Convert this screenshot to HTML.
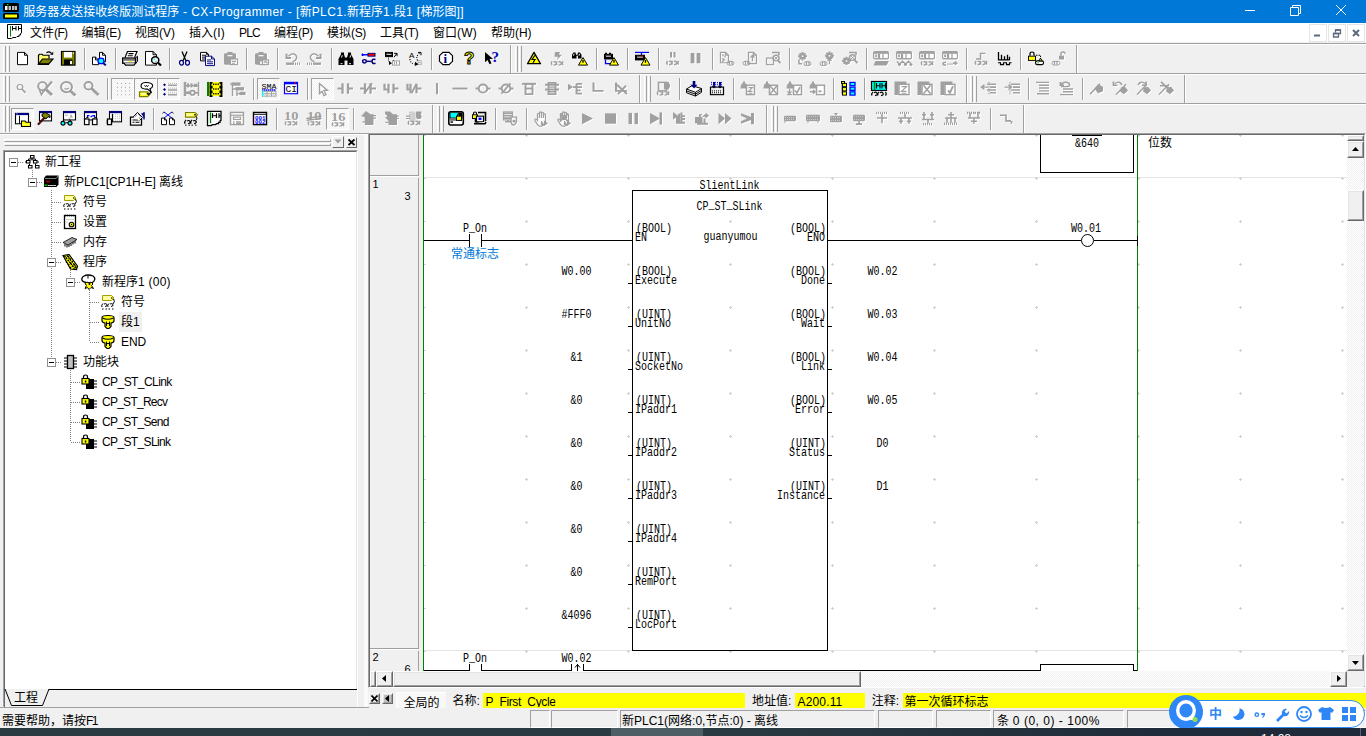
<!DOCTYPE html><html lang="zh"><head><meta charset="utf-8"><title>CX-Programmer</title><style>
html,body{margin:0;padding:0;}
body{width:1366px;height:736px;overflow:hidden;background:#f0f0f0;position:relative;
 font-family:"Liberation Sans","Noto Sans CJK SC",sans-serif;font-size:12px;color:#000;}
div,span,svg{position:absolute;box-sizing:border-box;}
.t{white-space:nowrap;line-height:16px;height:16px;}
i{font-style:normal;}
.hl{height:1px;}
.vl{width:1px;}
.sep{width:2px;border-left:1px solid #a0a0a0;border-right:1px solid #fff;}
.grip{width:3px;border-left:1px solid #fff;border-right:1px solid #a0a0a0;}
.pressed{border:1px solid;border-color:#a0a0a0 #fff #fff #a0a0a0;
 background-image:linear-gradient(45deg,#fff 25%,transparent 25%,transparent 75%,#fff 75%),linear-gradient(45deg,#fff 25%,transparent 25%,transparent 75%,#fff 75%);
 background-size:2px 2px;background-position:0 0,1px 1px;background-color:#f0f0f0;}
.btn3d{border:1px solid;border-color:#fff #696969 #696969 #fff;background:#f0f0f0;}
.btn3d:after{content:"";position:absolute;right:0;bottom:0;left:0;top:0;border:1px solid;border-color:#e3e3e3 #a0a0a0 #a0a0a0 #e3e3e3;}
.pane{border:1px solid;border-color:#a0a0a0 #fff #fff #a0a0a0;height:17px;}
.yel{background:#ffff00;height:15px;}
.hatch{background-image:linear-gradient(45deg,#fff 25%,transparent 25%,transparent 75%,#fff 75%),linear-gradient(45deg,#fff 25%,transparent 25%,transparent 75%,#fff 75%);
 background-size:2px 2px;background-position:0 0,1px 1px;background-color:#f0f0f0;}
</style></head><body><div class="" style="left:0px;top:0px;width:1366px;height:23px;background:#0078d7;"></div><svg style="left:2px;top:3px" width="18" height="17" viewBox="0 0 18 17"><rect x="1" y="0" width="16" height="9" rx="1.5" fill="#000"/><rect x="3" y="3" width="2.5" height="4" fill="#fff"/><rect x="6.5" y="3" width="2.5" height="4" fill="#c0c0c0"/><rect x="10" y="3" width="2.5" height="4" fill="#c0c0c0"/><rect x="13" y="3" width="2" height="4" fill="#c0c0c0"/><rect x="5" y="1" width="1.5" height="1.2" fill="#0f0"/><rect x="1" y="10" width="16" height="6" rx="1.5" fill="#000"/><rect x="3" y="11.5" width="12" height="3" fill="#ffff00"/></svg><span class="t" style="left:23.3px;top:4px;color:#fff;">服务器发送接收终版测试程序<i style="letter-spacing:0.416px"> - CX-Programmer - [</i>新<i style="letter-spacing:0.416px">PLC1.</i>新程序<i style="letter-spacing:0.416px">1.</i>段<i style="letter-spacing:0.416px">1 [</i>梯形图<i style="letter-spacing:0.416px">]]</i></span><svg style="left:1240px;top:0" width="126" height="23" viewBox="0 0 126 23" fill="none" stroke="#fff" stroke-width="1"><path d="M5 10.5h10"/><path d="M50.5 7.5h8v8h-8z M52.5 7.5v-2h8v8h-2"/><path d="M96 5l10 10M106 5l-10 10"/></svg><div class="" style="left:0px;top:23px;width:1366px;height:19px;background:#fff;"></div><div class="" style="left:0px;top:42px;width:1366px;height:1px;background:#f0f0f0;"></div><div class="" style="left:0px;top:43px;width:1366px;height:1px;background:#a0a0a0;"></div><div class="" style="left:0px;top:44px;width:1366px;height:1px;background:#fff;"></div><svg style="left:7px;top:24px" width="16" height="16" viewBox="0 0 16 16"><path d="M0.5 0.5h14v8.500l-1 .5v1.500h-1.500v1.500h-2l-1 1h-3l-1.500 1h-4z" fill="#fff" stroke="#000"/><path d="M3.5 2v10.500" stroke="#008000"/><path d="M5.500 2v4.500M5.500 4.500h3.500M9 2v4.500M11.500 2v4.500M11.500 4.500h3" stroke="#000" fill="none"/></svg><span class="t m" style="left:30px;top:24.5px;">文件<i style="letter-spacing:-0.609px">(F)</i></span><span class="t m" style="left:81.5px;top:24.5px;">编辑<i style="letter-spacing:-0.167px">(E)</i></span><span class="t m" style="left:135px;top:24.5px;">视图<i style="letter-spacing:0.000px">(V)</i></span><span class="t m" style="left:189px;top:24.5px;">插入<i style="letter-spacing:0.224px">(I)</i></span><span class="t m" style="left:239px;top:24.5px;"><i style="letter-spacing:-0.781px">PLC</i></span><span class="t m" style="left:274px;top:24.5px;">编程<i style="letter-spacing:-0.333px">(P)</i></span><span class="t m" style="left:327px;top:24.5px;">模拟<i style="letter-spacing:-0.333px">(S)</i></span><span class="t m" style="left:380px;top:24.5px;">工具<i style="letter-spacing:-0.276px">(T)</i></span><span class="t m" style="left:433px;top:24.5px;">窗口<i style="letter-spacing:0.224px">(W)</i></span><span class="t m" style="left:491px;top:24.5px;">帮助<i style="letter-spacing:-0.057px">(H)</i></span><div class="" style="left:1309px;top:24px;width:18px;height:18px;background:#fff;border:1px solid #e5e5e5;"></div><div class="" style="left:1328px;top:24px;width:18px;height:18px;background:#fff;border:1px solid #e5e5e5;"></div><div class="" style="left:1347px;top:24px;width:18px;height:18px;background:#fff;border:1px solid #e5e5e5;"></div><svg style="left:1309px;top:24px" width="56" height="18" viewBox="0 0 56 18" fill="none" stroke="#5d6b7f"><path d="M5 11.5h6" stroke-width="2"/><path d="M24.5 9.5h5v3.500h-5z M26.5 8.500v-2.500h5v3.500h-2" stroke-width="1.3"/><path d="M24 9.500h6M26 6h6" stroke-width="1.600"/><path d="M44 6l6 6M50 6l-6 6" stroke-width="2"/></svg><div class="" style="left:0px;top:73px;width:1366px;height:1px;background:#a0a0a0;"></div><div class="" style="left:0px;top:74px;width:1366px;height:1px;background:#fff;"></div><div class="" style="left:0px;top:103px;width:1366px;height:1px;background:#a0a0a0;"></div><div class="" style="left:0px;top:104px;width:1366px;height:1px;background:#fff;"></div><div class="" style="left:0px;top:133px;width:1366px;height:1px;background:#a0a0a0;"></div><div class="" style="left:0px;top:134px;width:368px;height:1px;background:#fff;"></div><div class="grip" style="left:3px;top:46px;width:3px;height:26px;"></div><div class="grip" style="left:7px;top:46px;width:3px;height:26px;"></div><svg style="left:14px;top:51px;overflow:visible" width="17" height="16" viewBox="0 0 17 17" preserveAspectRatio="none"><path d="M3.5 1.5h7l3 3v10h-10z M10.5 1.5v3h3" fill="#fff" stroke="#000" stroke-width="1"/></svg><svg style="left:37px;top:51px;overflow:visible" width="17" height="16" viewBox="0 0 17 17" preserveAspectRatio="none"><path d="M1.500 14v-9.500l1-1h2.500l1 1h6v3.500" fill="#ffff70" stroke="#000" stroke-width="1.2"/><path d="M1.500 14l4-5.500h10.500l-4.500 5.500z" fill="#808000" stroke="#000" stroke-width="1.2"/><path d="M1 14h11" fill="none" stroke="#000" stroke-width="1.6"/><path d="M9.500 2q2.500-2.500 5 .5" fill="none" stroke="#000" stroke-width="1.2"/><path d="M13 4h3.200v-3.200z" fill="#000"/></svg><svg style="left:60px;top:51px;overflow:visible" width="17" height="16" viewBox="0 0 17 17" preserveAspectRatio="none"><rect x="1.5" y="0.5" width="13.5" height="14.5" fill="#808000" stroke="#000" stroke-width="1.2"/><rect x="4" y="1" width="8" height="6" fill="#fff"/><rect x="13" y="1.5" width="1" height="1.5" fill="#fff"/><rect x="4" y="9" width="8.5" height="6" fill="#000"/><rect x="10" y="10.5" width="2" height="3.5" fill="#fff"/></svg><div class="sep" style="left:84px;top:48px;width:2px;height:22px;"></div><svg style="left:91px;top:51px;overflow:visible" width="17" height="16" viewBox="0 0 17 17" preserveAspectRatio="none"><path d="M1.5 6.5h3l3 3v5h-6z M4.5 6.5v3h3" fill="#fff" stroke="#000" stroke-width="1"/><path d="M8.5 1.5h3l3 3v7h-6z M11.5 1.5v3h3" fill="#fff" stroke="#000" stroke-width="1"/><circle cx="10" cy="10.5" r="3" fill="#00ffff" stroke="#0000ff" stroke-width="1.3"/><path d="M12.3 12.800l2.500 2.500" fill="none" stroke="#000080" stroke-width="2"/></svg><div class="sep" style="left:115px;top:48px;width:2px;height:22px;"></div><svg style="left:122px;top:51px;overflow:visible" width="17" height="16" viewBox="0 0 17 17" preserveAspectRatio="none"><path d="M3 7l2.500-6.500h9.500l-2.500 6.500" fill="#fff" stroke="#000" stroke-width="1.2"/><path d="M6.500 2.800h5M5.800 5h5" fill="none" stroke="#000" stroke-width="1.1"/><path d="M13.500 7.500l2-2v5.500l-2.500 3" fill="#c8c8c8" stroke="#000" stroke-width="1"/><rect x="0.7" y="7.5" width="12.8" height="5.5" fill="#fff" stroke="#000" stroke-width="1.4"/><path d="M1.500 9.500h11.500" fill="none" stroke="#000" stroke-width="1"/><path d="M2 13l1.500 2h8.500l1.500-2" fill="#fff" stroke="#000" stroke-width="1.3"/><rect x="7" y="10.5" width="3" height="1.2" fill="#ffff00"/></svg><svg style="left:145px;top:51px;overflow:visible" width="17" height="16" viewBox="0 0 17 17" preserveAspectRatio="none"><path d="M0.5 0.5h7.5l3.5 3.5v11h-11z M8 0.5v3.5h3.5" fill="#fff" stroke="#000" stroke-width="1"/><circle cx="10.2" cy="9.7" r="3.6" fill="#f6f0f0" stroke="#000" stroke-width="1.5"/><rect x="8.5" y="8" width="1.5" height="1.5" fill="#00ffff"/><rect x="10" y="10.5" width="1.5" height="1.2" fill="#00ffff"/><path d="M13 12.500l3 3" fill="none" stroke="#000" stroke-width="2.2"/></svg><div class="sep" style="left:169px;top:48px;width:2px;height:22px;"></div><svg style="left:176px;top:51px;overflow:visible" width="17" height="16" viewBox="0 0 17 17" preserveAspectRatio="none"><path d="M6 0.5l4 10M11 0.5l-4 10" fill="none" stroke="#000" stroke-width="1.3"/><ellipse cx="5.5" cy="12.5" rx="2" ry="2.5" fill="none" stroke="#000080" stroke-width="1.2"/><ellipse cx="11.5" cy="12.5" rx="2" ry="2.5" fill="none" stroke="#000080" stroke-width="1.2"/></svg><svg style="left:199px;top:51px;overflow:visible" width="17" height="16" viewBox="0 0 17 17" preserveAspectRatio="none"><path d="M1.5 1.5h6l2 2v7h-8z M7.5 1.5v2h2" fill="#fff" stroke="#000" stroke-width="1"/><path d="M3 4.500h4M3 6.500h5M3 8.500h5" fill="none" stroke="#000" stroke-width="1"/><path d="M6.5 5.5h6l3 3v7h-9z M12.5 5.5v3h3" fill="#fff" stroke="#000080" stroke-width="1"/><path d="M8 9.500h4M8 11.500h6M8 13.500h6" fill="none" stroke="#000080" stroke-width="1"/></svg><svg style="left:222px;top:51px;overflow:visible" width="17" height="16" viewBox="0 0 17 17" preserveAspectRatio="none"><g transform="translate(1,1)"><path d="M2 4q0-1.500 1.500-1.500h9q1.500 0 1.500 1.500v9q0 1.500-1.500 1.500h-9q-1.500 0-1.500-1.500z" fill="#ffffff"/><rect x="5.5" y="1" width="5" height="2.5" fill="#ffffff"/><path d="M5.500 5h5" fill="none" stroke="#fff" stroke-width="1.25"/><rect x="8.5" y="8.5" width="7" height="6" fill="#fff" stroke="#ffffff" stroke-width="1.25"/><path d="M10 11h4M10 13h3" fill="none" stroke="#ffffff" stroke-width="1.25"/></g><path d="M2 4q0-1.500 1.500-1.500h9q1.500 0 1.500 1.500v9q0 1.500-1.500 1.500h-9q-1.500 0-1.500-1.500z" fill="#a0a0a0"/><rect x="5.5" y="1" width="5" height="2.5" fill="#a0a0a0"/><path d="M5.500 5h5" fill="none" stroke="#fff" stroke-width="1.25"/><rect x="8.5" y="8.5" width="7" height="6" fill="#fff" stroke="#a0a0a0" stroke-width="1.25"/><path d="M10 11h4M10 13h3" fill="none" stroke="#a0a0a0" stroke-width="1.25"/></svg><div class="sep" style="left:246px;top:48px;width:2px;height:22px;"></div><svg style="left:253px;top:51px;overflow:visible" width="17" height="16" viewBox="0 0 17 17" preserveAspectRatio="none"><g transform="translate(1,1)"><path d="M2 4q0-1.500 1.500-1.500h9q1.500 0 1.500 1.500v9q0 1.500-1.500 1.500h-9q-1.500 0-1.500-1.500z" fill="#ffffff"/><rect x="5.5" y="1" width="5" height="2.5" fill="#ffffff"/><path d="M5.500 5h5" fill="none" stroke="#fff" stroke-width="1.25"/><rect x="6.5" y="10.5" width="5" height="4" fill="#fff" stroke="#ffffff" stroke-width="1.25"/><rect x="9.5" y="9.5" width="6" height="5" fill="#fff" stroke="#ffffff" stroke-width="1.25"/><path d="M11 12.500l1.500-1.500l2 2" fill="none" stroke="#ffffff" stroke-width="1.25"/></g><path d="M2 4q0-1.500 1.500-1.500h9q1.500 0 1.500 1.500v9q0 1.500-1.500 1.500h-9q-1.500 0-1.500-1.500z" fill="#a0a0a0"/><rect x="5.5" y="1" width="5" height="2.5" fill="#a0a0a0"/><path d="M5.500 5h5" fill="none" stroke="#fff" stroke-width="1.25"/><rect x="6.5" y="10.5" width="5" height="4" fill="#fff" stroke="#a0a0a0" stroke-width="1.25"/><rect x="9.5" y="9.5" width="6" height="5" fill="#fff" stroke="#a0a0a0" stroke-width="1.25"/><path d="M11 12.500l1.500-1.500l2 2" fill="none" stroke="#a0a0a0" stroke-width="1.25"/></svg><div class="sep" style="left:277px;top:48px;width:2px;height:22px;"></div><svg style="left:284px;top:51px;overflow:visible" width="17" height="16" viewBox="0 0 17 17" preserveAspectRatio="none"><g transform="translate(1,1)"><path d="M4.500 5.500q5-5 8 0q1 4-4 6" fill="none" stroke="#ffffff" stroke-width="1.50"/><path d="M2.500 3v4.500h4.500" fill="none" stroke="#ffffff" stroke-width="2.00"/><path d="M2 13.500h8" fill="none" stroke="#ffffff" stroke-width="2.50"/><path d="M11 13.500h5" fill="none" stroke="#ffffff" stroke-width="2.50" stroke-dasharray="1 1"/></g><path d="M4.500 5.500q5-5 8 0q1 4-4 6" fill="none" stroke="#a0a0a0" stroke-width="1.50"/><path d="M2.500 3v4.500h4.500" fill="none" stroke="#a0a0a0" stroke-width="2.00"/><path d="M2 13.500h8" fill="none" stroke="#a0a0a0" stroke-width="2.50"/><path d="M11 13.500h5" fill="none" stroke="#a0a0a0" stroke-width="2.50" stroke-dasharray="1 1"/></svg><svg style="left:307px;top:51px;overflow:visible" width="17" height="16" viewBox="0 0 17 17" preserveAspectRatio="none"><g transform="translate(1,1)"><path d="M11.500 5.500q-5-5-8 0q-1 4 4 6" fill="none" stroke="#ffffff" stroke-width="1.50"/><path d="M13.500 3v4.500h-4.500" fill="none" stroke="#ffffff" stroke-width="2.00"/><path d="M6 13.500h8" fill="none" stroke="#ffffff" stroke-width="2.50"/><path d="M0 13.500h5" fill="none" stroke="#ffffff" stroke-width="2.50" stroke-dasharray="1 1"/></g><path d="M11.500 5.500q-5-5-8 0q-1 4 4 6" fill="none" stroke="#a0a0a0" stroke-width="1.50"/><path d="M13.500 3v4.500h-4.500" fill="none" stroke="#a0a0a0" stroke-width="2.00"/><path d="M6 13.500h8" fill="none" stroke="#a0a0a0" stroke-width="2.50"/><path d="M0 13.500h5" fill="none" stroke="#a0a0a0" stroke-width="2.50" stroke-dasharray="1 1"/></svg><div class="sep" style="left:331px;top:48px;width:2px;height:22px;"></div><svg style="left:338px;top:51px;overflow:visible" width="17" height="16" viewBox="0 0 17 17" preserveAspectRatio="none"><path d="M0.500 15v-6.500l2.500-5v-2h3v2l1 3.500h2l1-3.500v-2h3v2l2.500 5v6.500h-6v-5h-3v5z" fill="#000"/><rect x="2.5" y="13" width="2" height="1" fill="#fff"/><rect x="11" y="13" width="2" height="1" fill="#fff"/><path d="M3.500 7l.8-2.500M12 7l.8-2.500" fill="none" stroke="#fff" stroke-width="1"/></svg><svg style="left:361px;top:51px;overflow:visible" width="17" height="16" viewBox="0 0 17 17" preserveAspectRatio="none"><path d="M2 4h5" fill="none" stroke="#0000ff" stroke-width="1.5"/><rect x="7" y="2.5" width="7" height="3" fill="#ff0000" stroke="#000080" stroke-width="1"/><path d="M1 3l2 1l-2 1z" fill="#0000ff" stroke="#0000ff" stroke-width="1"/><circle cx="3.5" cy="11" r="1.8" fill="none" stroke="#000080" stroke-width="1.5"/><path d="M5.500 11h5" fill="none" stroke="#000080" stroke-width="1.5"/><path d="M14.500 9q-3.500-1-3.500 2t3.500 2" fill="none" stroke="#000080" stroke-width="1.6"/></svg><svg style="left:384px;top:51px;overflow:visible" width="17" height="16" viewBox="0 0 17 17" preserveAspectRatio="none"><rect x="1.5" y="1.5" width="7" height="4.5" fill="#000" stroke="#000" stroke-width="1"/><path d="M2.500 3.500h5" fill="none" stroke="#fff" stroke-width="1"/><path d="M3 2.500h1" fill="none" stroke="#008000" stroke-width="1"/><path d="M4.500 7v3.500l1.500 2" fill="none" stroke="#000" stroke-width="1" stroke-dasharray="1 1"/><path d="M10 2.500h3v3M13 2.500l-3 4" fill="none" stroke="#000" stroke-width="1"/><path d="M5 10.500l3 2.500l-3 2z" fill="#000"/><rect x="8.5" y="10.5" width="7" height="4.5" fill="#fff" stroke="#a0a0a0" stroke-width="1"/><path d="M10.500 11v3.500M12.500 11v3.500" fill="none" stroke="#a0a0a0" stroke-width="1"/><path d="M9 10h1" fill="none" stroke="#008000" stroke-width="1"/></svg><svg style="left:407px;top:51px;overflow:visible" width="17" height="16" viewBox="0 0 17 17" preserveAspectRatio="none"><text x="2" y="7" font-size="8" font-weight="normal" font-family="'Liberation Sans',sans-serif" fill="#000" >A</text><text x="10" y="15" font-size="8" font-weight="normal" font-family="'Liberation Sans',sans-serif" fill="#a0a0a0" >B</text><path d="M3 8.500q0 5 5.500 5.500" fill="none" stroke="#000" stroke-width="1.2" stroke-dasharray="1 1.500"/><path d="M8 11.500l3.500 2.500l-3.500 2z" fill="#000"/><path d="M10.500 10q-2-4 2-7.500" fill="none" stroke="#000" stroke-width="1.2" stroke-dasharray="1 1.500"/><path d="M11 1.500h3v3" fill="none" stroke="#000" stroke-width="1"/></svg><div class="sep" style="left:431px;top:48px;width:2px;height:22px;"></div><svg style="left:438px;top:51px;overflow:visible" width="17" height="16" viewBox="0 0 17 17" preserveAspectRatio="none"><path d="M5 1.500h6l3.500 3.500v6l-3.500 3.500h-6l-3.500-3.500v-6z" fill="#fff" stroke="#000" stroke-width="1.2"/><text x="5.5" y="13" font-size="13" font-weight="bold" font-family="'Liberation Serif',sans-serif" fill="#000080" >i</text></svg><svg style="left:461px;top:51px;overflow:visible" width="17" height="16" viewBox="0 0 17 17" preserveAspectRatio="none"><text x="3" y="14" font-size="17" font-weight="bold" font-family="'Liberation Sans',sans-serif" fill="#ffff00"  stroke="#000" stroke-width="1">?</text></svg><svg style="left:484px;top:51px;overflow:visible" width="17" height="16" viewBox="0 0 17 17" preserveAspectRatio="none"><path d="M1 1v11l2.500-2.500l2 4.500l2-1l-2-4.500h3.500z" fill="#000"/><text x="7.5" y="12" font-size="15" font-weight="bold" font-family="'Liberation Serif',sans-serif" fill="#0000c0" >?</text></svg><div class="" style="left:510px;top:45px;width:1px;height:28px;background:#a0a0a0;"></div><div class="" style="left:511px;top:45px;width:1px;height:28px;background:#fff;"></div><div class="grip" style="left:515px;top:46px;width:3px;height:26px;"></div><div class="grip" style="left:519px;top:46px;width:3px;height:26px;"></div><svg style="left:526px;top:51px;overflow:visible" width="17" height="16" viewBox="0 0 17 17" preserveAspectRatio="none"><path d="M8 1.500l6.500 12h-13z" fill="#ffff00" stroke="#000" stroke-width="1.3" stroke-linejoin="round"/><path d="M9 4.500l-3 4.500h3l-2 3.500" fill="none" stroke="#000" stroke-width="1.2"/></svg><svg style="left:549px;top:51px;overflow:visible" width="17" height="16" viewBox="0 0 17 17" preserveAspectRatio="none"><g transform="translate(1,1)"><path d="M6 1h5l-1 3h3l-5 5.500l1-3.500h-3.500z" fill="#ffffff"/><path d="M3 11q-1.5 2 0 4 M4.5 11.8q2.2 -1 3 1.2q-.5 2.2 -3 2 M8 11q-1.5 2 0 4 M9.5 11.8q2.2 -1 3 1.2q-.5 2.2 -3 2 M14 11q-1.5 2 0 4" fill="none" stroke="#ffffff" stroke-width="1.56"/></g><path d="M6 1h5l-1 3h3l-5 5.500l1-3.500h-3.500z" fill="#a0a0a0"/><path d="M3 11q-1.5 2 0 4 M4.5 11.8q2.2 -1 3 1.2q-.5 2.2 -3 2 M8 11q-1.5 2 0 4 M9.5 11.8q2.2 -1 3 1.2q-.5 2.2 -3 2 M14 11q-1.5 2 0 4" fill="none" stroke="#a0a0a0" stroke-width="1.56"/></svg><svg style="left:572px;top:51px;overflow:visible" width="17" height="16" viewBox="0 0 17 17" preserveAspectRatio="none"><path d="M0 8v-4l1.500-2.500h2l.5 2.500h1.500l.5-2.500h2l1.500 2.500v4h-3.500v-3h-1.500v3z" fill="#000"/><path d="M1.500 5l.5-2M7 5l.5-2" fill="none" stroke="#fff" stroke-width="1"/><path d="M11 7l4.5 8h-9z" fill="#ffff00" stroke="#000" stroke-width="1" stroke-linejoin="round"/><path d="M11 9.5v3 M11 13.7v.1" fill="none" stroke="#000" stroke-width="1.3"/></svg><div class="sep" style="left:596px;top:48px;width:2px;height:22px;"></div><svg style="left:603px;top:51px;overflow:visible" width="17" height="16" viewBox="0 0 17 17" preserveAspectRatio="none"><rect x="1.5" y="3.5" width="8" height="5" fill="#000" stroke="#000" stroke-width="1"/><path d="M2 2.500h2M6 2.500h2" fill="none" stroke="#000" stroke-width="1.5"/><path d="M3 5.500h5" fill="none" stroke="#fff" stroke-width="1"/><path d="M2 5h.8" fill="none" stroke="#008000" stroke-width="1"/><path d="M2.500 9v4.500h5" fill="none" stroke="#0000ff" stroke-width="1.3"/><path d="M11 7l4.5 8h-9z" fill="#ffff00" stroke="#000" stroke-width="1" stroke-linejoin="round"/><path d="M11 9.5v3 M11 13.7v.1" fill="none" stroke="#000" stroke-width="1.3"/></svg><div class="sep" style="left:627px;top:48px;width:2px;height:22px;"></div><svg style="left:634px;top:51px;overflow:visible" width="17" height="16" viewBox="0 0 17 17" preserveAspectRatio="none"><path d="M1 1.500h14" fill="none" stroke="#0000ff" stroke-width="1.3"/><path d="M7.500 2v2.500" fill="none" stroke="#0000ff" stroke-width="1.3"/><rect x="1.5" y="4.5" width="9" height="5" fill="#000" stroke="#000" stroke-width="1"/><path d="M3 6.500h6" fill="none" stroke="#fff" stroke-width="1"/><path d="M3 5.500h1" fill="none" stroke="#008000" stroke-width="1"/><path d="M7 5.500h2" fill="none" stroke="#ff0000" stroke-width="1"/><path d="M11.5 7l4.5 8h-9z" fill="#ffff00" stroke="#000" stroke-width="1" stroke-linejoin="round"/><path d="M11.5 9.5v3 M11.5 13.7v.1" fill="none" stroke="#000" stroke-width="1.3"/></svg><div class="sep" style="left:658px;top:48px;width:2px;height:22px;"></div><svg style="left:665px;top:51px;overflow:visible" width="17" height="16" viewBox="0 0 17 17" preserveAspectRatio="none"><g transform="translate(1,1)"><path d="M6 1v6M9.500 1v6" fill="none" stroke="#ffffff" stroke-width="2.00"/><path d="M2.5 10.5q-1.5 2 0 4 M4 11.3q2.2 -1 3 1.2q-.5 2.2 -3 2 M7.5 10.5q-1.5 2 0 4 M9 11.3q2.2 -1 3 1.2q-.5 2.2 -3 2 M13.5 10.5q-1.5 2 0 4" fill="none" stroke="#ffffff" stroke-width="1.56"/></g><path d="M6 1v6M9.500 1v6" fill="none" stroke="#a0a0a0" stroke-width="2.00"/><path d="M2.5 10.5q-1.5 2 0 4 M4 11.3q2.2 -1 3 1.2q-.5 2.2 -3 2 M7.5 10.5q-1.5 2 0 4 M9 11.3q2.2 -1 3 1.2q-.5 2.2 -3 2 M13.5 10.5q-1.5 2 0 4" fill="none" stroke="#a0a0a0" stroke-width="1.56"/></svg><svg style="left:688px;top:51px;overflow:visible" width="17" height="16" viewBox="0 0 17 17" preserveAspectRatio="none"><g transform="translate(1,1)"><path d="M4.500 2v11M10.500 2v11" fill="none" stroke="#ffffff" stroke-width="3.75"/></g><path d="M4.500 2v11M10.500 2v11" fill="none" stroke="#a0a0a0" stroke-width="3.75"/></svg><div class="sep" style="left:712px;top:48px;width:2px;height:22px;"></div><svg style="left:719px;top:51px;overflow:visible" width="17" height="16" viewBox="0 0 17 17" preserveAspectRatio="none"><g transform="translate(1,1)"><path d="M1.5 1.5h5l3 3v8h-8z M6.5 1.5v3h3" fill="none" stroke="#ffffff" stroke-width="1.25"/><path d="M4 3.500v2M6 5v2M4 7.500v2M3 11.500l3-2.500" fill="none" stroke="#ffffff" stroke-width="1.25"/><rect x="8" y="11" width="7" height="4" rx="2" fill="none" stroke="#ffffff"/><path d="M10.5 10.5v4M13 10.5v4" fill="none" stroke="#ffffff" stroke-width="1.25"/></g><path d="M1.5 1.5h5l3 3v8h-8z M6.5 1.5v3h3" fill="none" stroke="#a0a0a0" stroke-width="1.25"/><path d="M4 3.500v2M6 5v2M4 7.500v2M3 11.500l3-2.500" fill="none" stroke="#a0a0a0" stroke-width="1.25"/><rect x="8" y="11" width="7" height="4" rx="2" fill="none" stroke="#a0a0a0"/><path d="M10.5 10.5v4M13 10.5v4" fill="none" stroke="#a0a0a0" stroke-width="1.25"/></svg><svg style="left:742px;top:51px;overflow:visible" width="17" height="16" viewBox="0 0 17 17" preserveAspectRatio="none"><g transform="translate(1,1)"><path d="M6.5 1.5h5l3 3v9h-8z M11.5 1.5v3h3" fill="none" stroke="#ffffff" stroke-width="1.25"/><path d="M10.500 11v-6M8.500 7l2-2.500l2 2.500" fill="none" stroke="#ffffff" stroke-width="1.25"/><rect x="1" y="11" width="7" height="4" rx="2" fill="none" stroke="#ffffff"/><path d="M3.5 10.5v4M6 10.5v4" fill="none" stroke="#ffffff" stroke-width="1.25"/></g><path d="M6.5 1.5h5l3 3v9h-8z M11.5 1.5v3h3" fill="none" stroke="#a0a0a0" stroke-width="1.25"/><path d="M10.500 11v-6M8.500 7l2-2.500l2 2.500" fill="none" stroke="#a0a0a0" stroke-width="1.25"/><rect x="1" y="11" width="7" height="4" rx="2" fill="none" stroke="#a0a0a0"/><path d="M3.5 10.5v4M6 10.5v4" fill="none" stroke="#a0a0a0" stroke-width="1.25"/></svg><svg style="left:765px;top:51px;overflow:visible" width="17" height="16" viewBox="0 0 17 17" preserveAspectRatio="none"><g transform="translate(1,1)"><rect x="1.5" y="7.5" width="7" height="7" fill="none" stroke="#ffffff" stroke-width="1.25"/><path d="M7 1.500h7v3" fill="none" stroke="#ffffff" stroke-width="1.62"/><circle cx="11" cy="7.5" r="3" fill="none" stroke="#ffffff" stroke-width="1.50"/><path d="M9.500 6l3 3M12.500 6l-3 3" fill="none" stroke="#ffffff" stroke-width="1.00"/><path d="M13 10l2.500 3" fill="none" stroke="#ffffff" stroke-width="2.00"/></g><rect x="1.5" y="7.5" width="7" height="7" fill="none" stroke="#a0a0a0" stroke-width="1.25"/><path d="M7 1.500h7v3" fill="none" stroke="#a0a0a0" stroke-width="1.62"/><circle cx="11" cy="7.5" r="3" fill="none" stroke="#a0a0a0" stroke-width="1.50"/><path d="M9.500 6l3 3M12.500 6l-3 3" fill="none" stroke="#a0a0a0" stroke-width="1.00"/><path d="M13 10l2.500 3" fill="none" stroke="#a0a0a0" stroke-width="2.00"/></svg><div class="sep" style="left:789px;top:48px;width:2px;height:22px;"></div><svg style="left:796px;top:51px;overflow:visible" width="17" height="16" viewBox="0 0 17 17" preserveAspectRatio="none"><g transform="translate(1,1)"><circle cx="6.5" cy="5.5" r="3.2" fill="#ffffff"/><path d="M2 5.5h9M6.5 1v9M3.5 2.5l6 6M9.5 2.5l-6 6" fill="none" stroke="#ffffff" stroke-width="2.00"/><circle cx="6.5" cy="5.5" r="1" fill="#f0f0f0"/><path d="M3 9v4.500h3" fill="none" stroke="#ffffff" stroke-width="1.50"/><rect x="8" y="11.5" width="7" height="4" rx="2" fill="none" stroke="#ffffff"/><path d="M10.5 11v4M13 11v4" fill="none" stroke="#ffffff" stroke-width="1.25"/></g><circle cx="6.5" cy="5.5" r="3.2" fill="#a0a0a0"/><path d="M2 5.5h9M6.5 1v9M3.5 2.5l6 6M9.5 2.5l-6 6" fill="none" stroke="#a0a0a0" stroke-width="2.00"/><circle cx="6.5" cy="5.5" r="1" fill="#f0f0f0"/><path d="M3 9v4.500h3" fill="none" stroke="#a0a0a0" stroke-width="1.50"/><rect x="8" y="11.5" width="7" height="4" rx="2" fill="none" stroke="#a0a0a0"/><path d="M10.5 11v4M13 11v4" fill="none" stroke="#a0a0a0" stroke-width="1.25"/></svg><svg style="left:819px;top:51px;overflow:visible" width="17" height="16" viewBox="0 0 17 17" preserveAspectRatio="none"><g transform="translate(1,1)"><circle cx="10.5" cy="5" r="3.2" fill="#ffffff"/><path d="M6 5h9M10.5 0.5v9M7.5 2l6 6M13.5 2l-6 6" fill="none" stroke="#ffffff" stroke-width="2.00"/><circle cx="10.5" cy="5" r="1" fill="#f0f0f0"/><path d="M10.500 8v6M8.500 10.500l2-2.500l2 2.500" fill="none" stroke="#ffffff" stroke-width="1.25"/><rect x="1" y="11.5" width="7" height="4" rx="2" fill="none" stroke="#ffffff"/><path d="M3.5 11v4M6 11v4" fill="none" stroke="#ffffff" stroke-width="1.25"/></g><circle cx="10.5" cy="5" r="3.2" fill="#a0a0a0"/><path d="M6 5h9M10.5 0.5v9M7.5 2l6 6M13.5 2l-6 6" fill="none" stroke="#a0a0a0" stroke-width="2.00"/><circle cx="10.5" cy="5" r="1" fill="#f0f0f0"/><path d="M10.500 8v6M8.500 10.500l2-2.500l2 2.500" fill="none" stroke="#a0a0a0" stroke-width="1.25"/><rect x="1" y="11.5" width="7" height="4" rx="2" fill="none" stroke="#a0a0a0"/><path d="M3.5 11v4M6 11v4" fill="none" stroke="#a0a0a0" stroke-width="1.25"/></svg><svg style="left:842px;top:51px;overflow:visible" width="17" height="16" viewBox="0 0 17 17" preserveAspectRatio="none"><g transform="translate(1,1)"><circle cx="4.5" cy="10.5" r="3.2" fill="#ffffff"/><path d="M0 10.5h9M4.5 6v9M1.5 7.5l6 6M7.5 7.5l-6 6" fill="none" stroke="#ffffff" stroke-width="2.00"/><circle cx="4.5" cy="10.5" r="1" fill="#f0f0f0"/><path d="M7 1.500h7v3" fill="none" stroke="#ffffff" stroke-width="1.62"/><circle cx="10.5" cy="7" r="3" fill="#fff" stroke="#ffffff" stroke-width="1.50"/><path d="M9 5.500l3 3M12 5.500l-3 3" fill="none" stroke="#ffffff" stroke-width="1.00"/><path d="M12.500 9.500l3 3.500" fill="none" stroke="#ffffff" stroke-width="2.00"/></g><circle cx="4.5" cy="10.5" r="3.2" fill="#a0a0a0"/><path d="M0 10.5h9M4.5 6v9M1.5 7.5l6 6M7.5 7.5l-6 6" fill="none" stroke="#a0a0a0" stroke-width="2.00"/><circle cx="4.5" cy="10.5" r="1" fill="#f0f0f0"/><path d="M7 1.500h7v3" fill="none" stroke="#a0a0a0" stroke-width="1.62"/><circle cx="10.5" cy="7" r="3" fill="#fff" stroke="#a0a0a0" stroke-width="1.50"/><path d="M9 5.500l3 3M12 5.500l-3 3" fill="none" stroke="#a0a0a0" stroke-width="1.00"/><path d="M12.500 9.500l3 3.500" fill="none" stroke="#a0a0a0" stroke-width="2.00"/></svg><div class="sep" style="left:866px;top:48px;width:2px;height:22px;"></div><svg style="left:873px;top:51px;overflow:visible" width="17" height="16" viewBox="0 0 17 17" preserveAspectRatio="none"><g transform="translate(1,1)"><rect x="0" y="0" width="16" height="9" rx="1.8" fill="#ffffff"/><rect x="1.2" y="3" width="13.6" height="4.5" fill="#fff"/><path d="M5.500 3v4.500M6.500 3v4.500M10 3v4.500" fill="none" stroke="#ffffff" stroke-width="1.25"/><rect x="2.2" y="3.8" width="1.8" height="2.8" fill="#ffffff"/><path d="M0.500 15.500l2-5h13.500l-2.500 5z" fill="#ffffff"/></g><rect x="0" y="0" width="16" height="9" rx="1.8" fill="#a0a0a0"/><rect x="1.2" y="3" width="13.6" height="4.5" fill="#fff"/><path d="M5.500 3v4.500M6.500 3v4.500M10 3v4.500" fill="none" stroke="#a0a0a0" stroke-width="1.25"/><rect x="2.2" y="3.8" width="1.8" height="2.8" fill="#a0a0a0"/><path d="M0.500 15.500l2-5h13.500l-2.500 5z" fill="#a0a0a0"/></svg><svg style="left:896px;top:51px;overflow:visible" width="17" height="16" viewBox="0 0 17 17" preserveAspectRatio="none"><g transform="translate(1,1)"><rect x="0" y="0" width="16" height="9" rx="1.8" fill="#ffffff"/><rect x="1.2" y="3" width="13.6" height="4.5" fill="#fff"/><path d="M5.500 3v4.500M6.500 3v4.500M10 3v4.500" fill="none" stroke="#ffffff" stroke-width="1.25"/><rect x="2.2" y="3.8" width="1.8" height="2.8" fill="#ffffff"/><path d="M1 11l2.500 3l3-3l3 3l3-3l3 3M2 14.500h3M3.500 13v3M8 14.500h3M9.500 13v3M13.500 14.500h3M15 13v3" fill="none" stroke="#ffffff" stroke-width="1.50"/></g><rect x="0" y="0" width="16" height="9" rx="1.8" fill="#a0a0a0"/><rect x="1.2" y="3" width="13.6" height="4.5" fill="#fff"/><path d="M5.500 3v4.500M6.500 3v4.500M10 3v4.500" fill="none" stroke="#a0a0a0" stroke-width="1.25"/><rect x="2.2" y="3.8" width="1.8" height="2.8" fill="#a0a0a0"/><path d="M1 11l2.500 3l3-3l3 3l3-3l3 3M2 14.500h3M3.500 13v3M8 14.500h3M9.500 13v3M13.500 14.500h3M15 13v3" fill="none" stroke="#a0a0a0" stroke-width="1.50"/></svg><svg style="left:919px;top:51px;overflow:visible" width="17" height="16" viewBox="0 0 17 17" preserveAspectRatio="none"><g transform="translate(1,1)"><rect x="0" y="0" width="16" height="9" rx="1.8" fill="#ffffff"/><rect x="1.2" y="3" width="13.6" height="4.5" fill="#fff"/><path d="M5.500 3v4.500M6.500 3v4.500M10 3v4.500" fill="none" stroke="#ffffff" stroke-width="1.25"/><rect x="2.2" y="3.8" width="1.8" height="2.8" fill="#ffffff"/><path d="M3 11q-1.5 2 0 4 M4.5 11.8q2.2 -1 3 1.2q-.5 2.2 -3 2 M8 11q-1.5 2 0 4 M9.5 11.8q2.2 -1 3 1.2q-.5 2.2 -3 2 M14 11q-1.5 2 0 4" fill="none" stroke="#ffffff" stroke-width="1.56"/></g><rect x="0" y="0" width="16" height="9" rx="1.8" fill="#a0a0a0"/><rect x="1.2" y="3" width="13.6" height="4.5" fill="#fff"/><path d="M5.500 3v4.500M6.500 3v4.500M10 3v4.500" fill="none" stroke="#a0a0a0" stroke-width="1.25"/><rect x="2.2" y="3.8" width="1.8" height="2.8" fill="#a0a0a0"/><path d="M3 11q-1.5 2 0 4 M4.5 11.8q2.2 -1 3 1.2q-.5 2.2 -3 2 M8 11q-1.5 2 0 4 M9.5 11.8q2.2 -1 3 1.2q-.5 2.2 -3 2 M14 11q-1.5 2 0 4" fill="none" stroke="#a0a0a0" stroke-width="1.56"/></svg><svg style="left:942px;top:51px;overflow:visible" width="17" height="16" viewBox="0 0 17 17" preserveAspectRatio="none"><g transform="translate(1,1)"><rect x="0" y="0" width="16" height="9" rx="1.8" fill="#ffffff"/><rect x="1.2" y="3" width="13.6" height="4.5" fill="#fff"/><path d="M5.500 3v4.500M6.500 3v4.500M10 3v4.500" fill="none" stroke="#ffffff" stroke-width="1.25"/><rect x="2.2" y="3.8" width="1.8" height="2.8" fill="#ffffff"/><path d="M4 12q-3 0-3 1.500t3 1.500" fill="none" stroke="#ffffff" stroke-width="1.62"/><path d="M5.500 14h6" fill="none" stroke="#ffffff" stroke-width="1.88" stroke-dasharray="1 1"/><path d="M11 13h4.500M13.500 11v4" fill="none" stroke="#ffffff" stroke-width="1.62"/></g><rect x="0" y="0" width="16" height="9" rx="1.8" fill="#a0a0a0"/><rect x="1.2" y="3" width="13.6" height="4.5" fill="#fff"/><path d="M5.500 3v4.500M6.500 3v4.500M10 3v4.500" fill="none" stroke="#a0a0a0" stroke-width="1.25"/><rect x="2.2" y="3.8" width="1.8" height="2.8" fill="#a0a0a0"/><path d="M4 12q-3 0-3 1.500t3 1.500" fill="none" stroke="#a0a0a0" stroke-width="1.62"/><path d="M5.500 14h6" fill="none" stroke="#a0a0a0" stroke-width="1.88" stroke-dasharray="1 1"/><path d="M11 13h4.500M13.500 11v4" fill="none" stroke="#a0a0a0" stroke-width="1.62"/></svg><div class="sep" style="left:966px;top:48px;width:2px;height:22px;"></div><svg style="left:973px;top:51px;overflow:visible" width="17" height="16" viewBox="0 0 17 17" preserveAspectRatio="none"><g transform="translate(1,1)"><path d="M3 8.500h4.500v-6h5" fill="none" stroke="#ffffff" stroke-width="1.50"/><path d="M3 10.5q-1.5 2 0 4 M4.5 11.3q2.2 -1 3 1.2q-.5 2.2 -3 2 M8 10.5q-1.5 2 0 4 M9.5 11.3q2.2 -1 3 1.2q-.5 2.2 -3 2 M14 10.5q-1.5 2 0 4" fill="none" stroke="#ffffff" stroke-width="1.56"/></g><path d="M3 8.500h4.500v-6h5" fill="none" stroke="#a0a0a0" stroke-width="1.50"/><path d="M3 10.5q-1.5 2 0 4 M4.5 11.3q2.2 -1 3 1.2q-.5 2.2 -3 2 M8 10.5q-1.5 2 0 4 M9.5 11.3q2.2 -1 3 1.2q-.5 2.2 -3 2 M14 10.5q-1.5 2 0 4" fill="none" stroke="#a0a0a0" stroke-width="1.56"/></svg><svg style="left:996px;top:51px;overflow:visible" width="17" height="16" viewBox="0 0 17 17" preserveAspectRatio="none"><path d="M2.500 1v9M2.500 9.500h11M5.500 4v5.500M8.500 5.500v4M11.500 4v5.500M13.500 6v3.500" fill="none" stroke="#000" stroke-width="1.3"/><path d="M2 12.500h2.500v2h3v-2h3v2h3v-2h2" fill="none" stroke="#000" stroke-width="1.2"/></svg><div class="sep" style="left:1020px;top:48px;width:2px;height:22px;"></div><svg style="left:1027px;top:51px;overflow:visible" width="17" height="16" viewBox="0 0 17 17" preserveAspectRatio="none"><path d="M3 5v-2q0-2 2-2t2 2v2" fill="none" stroke="#000" stroke-width="1.2"/><rect x="1.5" y="5.5" width="7" height="4.5" fill="#ffff00" stroke="#000" stroke-width="1"/><path d="M9 4.500h4.500v4" fill="none" stroke="#000" stroke-width="1" stroke-dasharray="1.5 1"/><path d="M10 10.500h5q1.500 0 1.500 2t-1.500 2h-5q-1.500 0-1.500-2t1.500-2z" fill="#fff" stroke="#000" stroke-width="1.2"/><path d="M10.500 12.500h1" fill="none" stroke="#008000" stroke-width="1.3"/><path d="M12 10.500l1.500-3l1.500 3z" fill="#ffff00" stroke="#000" stroke-width="1"/></svg><svg style="left:1050px;top:51px;overflow:visible" width="17" height="16" viewBox="0 0 17 17" preserveAspectRatio="none"><g transform="translate(1,1)"><path d="M11 5v-2q0-2 2-2t2 2" fill="none" stroke="#ffffff" stroke-width="1.50"/><rect x="9" y="5" width="5" height="4" fill="#ffffff"/><rect x="2" y="11" width="8" height="4" rx="2" fill="none" stroke="#ffffff"/><path d="M4.5 10.5v4M7 10.5v4" fill="none" stroke="#ffffff" stroke-width="1.25"/></g><path d="M11 5v-2q0-2 2-2t2 2" fill="none" stroke="#a0a0a0" stroke-width="1.50"/><rect x="9" y="5" width="5" height="4" fill="#a0a0a0"/><rect x="2" y="11" width="8" height="4" rx="2" fill="none" stroke="#a0a0a0"/><path d="M4.5 10.5v4M7 10.5v4" fill="none" stroke="#a0a0a0" stroke-width="1.25"/></svg><div class="" style="left:1076px;top:45px;width:1px;height:28px;background:#a0a0a0;"></div><div class="" style="left:1077px;top:45px;width:1px;height:28px;background:#fff;"></div><div class="grip" style="left:3px;top:76px;width:3px;height:26px;"></div><div class="grip" style="left:7px;top:76px;width:3px;height:26px;"></div><svg style="left:14px;top:81px;overflow:visible" width="17" height="16" viewBox="0 0 17 17" preserveAspectRatio="none"><g transform="translate(1,1)"><circle cx="6" cy="6.5" r="2.8" fill="none" stroke="#ffffff" stroke-width="1.25"/><path d="M8 8.500l3.500 4" fill="none" stroke="#ffffff" stroke-width="1.88"/></g><circle cx="6" cy="6.5" r="2.8" fill="none" stroke="#a0a0a0" stroke-width="1.25"/><path d="M8 8.500l3.500 4" fill="none" stroke="#a0a0a0" stroke-width="1.88"/></svg><svg style="left:37px;top:81px;overflow:visible" width="17" height="16" viewBox="0 0 17 17" preserveAspectRatio="none"><g transform="translate(1,1)"><circle cx="5.5" cy="5.5" r="4.3" fill="none" stroke="#ffffff" stroke-width="2.00"/><path d="M15 0.5l-9 11" fill="none" stroke="#ffffff" stroke-width="2.25"/><path d="M8 8l7 7" fill="none" stroke="#ffffff" stroke-width="3.00"/><path d="M2.500 9.500l2 5l2.500-4.500" fill="none" stroke="#ffffff" stroke-width="1.62"/></g><circle cx="5.5" cy="5.5" r="4.3" fill="none" stroke="#a0a0a0" stroke-width="2.00"/><path d="M15 0.5l-9 11" fill="none" stroke="#a0a0a0" stroke-width="2.25"/><path d="M8 8l7 7" fill="none" stroke="#a0a0a0" stroke-width="3.00"/><path d="M2.500 9.500l2 5l2.500-4.500" fill="none" stroke="#a0a0a0" stroke-width="1.62"/></svg><svg style="left:60px;top:81px;overflow:visible" width="17" height="16" viewBox="0 0 17 17" preserveAspectRatio="none"><g transform="translate(1,1)"><circle cx="6.5" cy="6.5" r="5.5" fill="none" stroke="#ffffff" stroke-width="2.00"/><path d="M10.500 10.500l5 5" fill="none" stroke="#ffffff" stroke-width="3.00"/><path d="M4.500 8q2 1.500 4.500-.5" fill="none" stroke="#ffffff" stroke-width="1.25"/></g><circle cx="6.5" cy="6.5" r="5.5" fill="none" stroke="#a0a0a0" stroke-width="2.00"/><path d="M10.500 10.500l5 5" fill="none" stroke="#a0a0a0" stroke-width="3.00"/><path d="M4.500 8q2 1.500 4.500-.5" fill="none" stroke="#a0a0a0" stroke-width="1.25"/></svg><svg style="left:83px;top:81px;overflow:visible" width="17" height="16" viewBox="0 0 17 17" preserveAspectRatio="none"><g transform="translate(1,1)"><circle cx="5.5" cy="5" r="4" fill="none" stroke="#ffffff" stroke-width="2.00"/><path d="M8.500 8l7 7" fill="none" stroke="#ffffff" stroke-width="3.00"/></g><circle cx="5.5" cy="5" r="4" fill="none" stroke="#a0a0a0" stroke-width="2.00"/><path d="M8.500 8l7 7" fill="none" stroke="#a0a0a0" stroke-width="3.00"/></svg><div class="sep" style="left:107px;top:78px;width:2px;height:22px;"></div><div class="pressed" style="left:111px;top:78px;width:23px;height:22px;"></div><svg style="left:115px;top:82px;overflow:visible" width="17" height="16" viewBox="0 0 17 17" preserveAspectRatio="none"><rect x="2" y="1" width="1" height="1" fill="#a0a0a0"/><rect x="2" y="5" width="1" height="1" fill="#a0a0a0"/><rect x="2" y="9" width="1" height="1" fill="#a0a0a0"/><rect x="2" y="13" width="1" height="1" fill="#a0a0a0"/><rect x="6" y="1" width="1" height="1" fill="#a0a0a0"/><rect x="6" y="5" width="1" height="1" fill="#a0a0a0"/><rect x="6" y="9" width="1" height="1" fill="#a0a0a0"/><rect x="6" y="13" width="1" height="1" fill="#a0a0a0"/><rect x="10" y="1" width="1" height="1" fill="#a0a0a0"/><rect x="10" y="5" width="1" height="1" fill="#a0a0a0"/><rect x="10" y="9" width="1" height="1" fill="#a0a0a0"/><rect x="10" y="13" width="1" height="1" fill="#a0a0a0"/><rect x="14" y="1" width="1" height="1" fill="#a0a0a0"/><rect x="14" y="5" width="1" height="1" fill="#a0a0a0"/><rect x="14" y="9" width="1" height="1" fill="#a0a0a0"/><rect x="14" y="13" width="1" height="1" fill="#a0a0a0"/></svg><div class="pressed" style="left:134px;top:78px;width:23px;height:22px;"></div><svg style="left:138px;top:82px;overflow:visible" width="17" height="16" viewBox="0 0 17 17" preserveAspectRatio="none"><path d="M7 0.500q6-.5 7.500 2.500q.5 3-2.500 4l1 3.500l-3.500-3q-6 .5-6.500-3q0-3.500 4-4z" fill="#fff" stroke="#000" stroke-width="1.1"/><path d="M6.500 3.500l1 1.500l1-1.500l1 1.500l1-1.500" fill="none" stroke="#000" stroke-width="0.9"/><path d="M1.500 10.500h8l2.500 2.500l-2.500 2.500h-8z" fill="#ffff00" stroke="#808000" stroke-width="1.2"/><path d="M3 12h5M3 13.500h5" fill="none" stroke="#fff" stroke-width="0.8"/><path d="M9 12l1.500 1.500l3-3" fill="none" stroke="#000" stroke-width="1.3"/></svg><div class="pressed" style="left:157px;top:78px;width:23px;height:22px;"></div><svg style="left:161px;top:82px;overflow:visible" width="17" height="16" viewBox="0 0 17 17" preserveAspectRatio="none"><path d="M2 3l1.500-1.500l1.500 1.500l-1.500 1.500z" fill="#000080"/><path d="M2 8l1.500-1.500l1.500 1.500l-1.500 1.500z" fill="#000080"/><path d="M2 13l1.500-1.500l1.500 1.500l-1.500 1.500z" fill="#000080"/><path d="M7 3.500h9M7 8.500h9M7 13.500h9" fill="none" stroke="#a0a0a0" stroke-width="1.5"/><path d="M7 1.500h9M7 6.500h9M7 11.500h9" fill="none" stroke="#a0a0a0" stroke-width="0.8" stroke-dasharray="1 1"/></svg><svg style="left:183px;top:81px;overflow:visible" width="17" height="16" viewBox="0 0 17 17" preserveAspectRatio="none"><g transform="translate(1,1)"><path d="M2 1v15" fill="none" stroke="#ffffff" stroke-width="2.50"/><path d="M15.500 1v15" fill="none" stroke="#ffffff" stroke-width="1.50"/><path d="M2 5h13.500M5 2.500v4.500M8.500 2.500v4.500M2 12.500h5M12 12.500h3.500" fill="none" stroke="#ffffff" stroke-width="1.88"/><rect x="11" y="3" width="3" height="3.5" fill="#ffffff"/><rect x="3.5" y="11" width="3" height="3" fill="#ffffff"/><circle cx="9.5" cy="12.5" r="2.3" fill="none" stroke="#ffffff" stroke-width="2.00"/></g><path d="M2 1v15" fill="none" stroke="#a0a0a0" stroke-width="2.50"/><path d="M15.500 1v15" fill="none" stroke="#a0a0a0" stroke-width="1.50"/><path d="M2 5h13.500M5 2.500v4.500M8.500 2.500v4.500M2 12.500h5M12 12.500h3.500" fill="none" stroke="#a0a0a0" stroke-width="1.88"/><rect x="11" y="3" width="3" height="3.5" fill="#a0a0a0"/><rect x="3.5" y="11" width="3" height="3" fill="#a0a0a0"/><circle cx="9.5" cy="12.5" r="2.3" fill="none" stroke="#a0a0a0" stroke-width="2.00"/></svg><svg style="left:206px;top:81px;overflow:visible" width="17" height="16" viewBox="0 0 17 17" preserveAspectRatio="none"><rect x="1" y="1" width="2.2" height="15" fill="#008000"/><rect x="3.2" y="1" width="13" height="15" fill="#ffff00"/><path d="M6.500 2h-2v4h2M13.500 2h2v4h-2" fill="none" stroke="#000" stroke-width="1.8"/><path d="M7 3.5h6" fill="none" stroke="#000" stroke-width="1.6" stroke-dasharray="1 0.700"/><path d="M6.500 7h-2v4h2M13.500 7h2v4h-2" fill="none" stroke="#000" stroke-width="1.8"/><path d="M7 8.5h6" fill="none" stroke="#000" stroke-width="1.6" stroke-dasharray="1 0.700"/><path d="M6.500 12h-2v4h2M13.500 12h2v4h-2" fill="none" stroke="#000" stroke-width="1.8"/><path d="M7 13.5h6" fill="none" stroke="#000" stroke-width="1.6" stroke-dasharray="1 0.700"/></svg><svg style="left:229px;top:81px;overflow:visible" width="17" height="16" viewBox="0 0 17 17" preserveAspectRatio="none"><g transform="translate(1,1)"><rect x="2.5" y="1.5" width="9" height="3.5" fill="#ffffff"/><rect x="6.5" y="6.5" width="8.5" height="3.5" fill="#ffffff"/><rect x="10.5" y="11.5" width="6" height="3.5" fill="#ffffff"/><path d="M1 3h2M3.500 4v12M3.500 8.500h3.500M8 10v6M8 13.500h3" fill="none" stroke="#ffffff" stroke-width="1.38"/></g><rect x="2.5" y="1.5" width="9" height="3.5" fill="#a0a0a0"/><rect x="6.5" y="6.5" width="8.5" height="3.5" fill="#a0a0a0"/><rect x="10.5" y="11.5" width="6" height="3.5" fill="#a0a0a0"/><path d="M1 3h2M3.500 4v12M3.500 8.500h3.500M8 10v6M8 13.500h3" fill="none" stroke="#a0a0a0" stroke-width="1.38"/></svg><div class="sep" style="left:253px;top:78px;width:2px;height:22px;"></div><div class="pressed" style="left:257px;top:78px;width:23px;height:22px;"></div><svg style="left:261px;top:82px;overflow:visible" width="17" height="16" viewBox="0 0 17 17" preserveAspectRatio="none"><text x="0.5" y="7" font-size="8.5" font-weight="normal" font-family="'Liberation Mono',sans-serif" fill="#000"  textLength="15" lengthAdjust="spacingAndGlyphs">SMA</text><path d="M1 8.500h14" fill="none" stroke="#0000ff" stroke-width="1.6" stroke-dasharray="1.5 .5"/><path d="M1.500 10h13.500v5.500M1.500 10v5.500M1.500 12.500h13.500M1.500 15h13.500M6 10v5.500M10.500 10v5.500" fill="none" stroke="#a0a0a0" stroke-width="1"/><path d="M1.500 9v6.500" fill="none" stroke="#00ffff" stroke-width="1.3"/></svg><svg style="left:283px;top:81px;overflow:visible" width="17" height="16" viewBox="0 0 17 17" preserveAspectRatio="none"><rect x="1.5" y="1.5" width="13" height="12" fill="#fff" stroke="#0000ff" stroke-width="1.2"/><rect x="1" y="1" width="14" height="2.5" fill="#0000ff"/><rect x="11.5" y="1.2" width="1.5" height="1.5" fill="#ff0000"/><text x="2.5" y="12" font-size="10" font-weight="normal" font-family="'Liberation Mono',sans-serif" fill="#000"  textLength="11.5" lengthAdjust="spacingAndGlyphs">CI</text></svg><div class="sep" style="left:307px;top:78px;width:2px;height:22px;"></div><div class="pressed" style="left:311px;top:78px;width:23px;height:22px;"></div><svg style="left:315px;top:82px;overflow:visible" width="17" height="16" viewBox="0 0 17 17" preserveAspectRatio="none"><g transform="translate(1,1)"><path d="M4.500 1.500v11l2.500-2.500l2 4.500l2-1l-2-4.500h3.500z" fill="#fff" stroke="#ffffff" stroke-width="1.38"/></g><path d="M4.500 1.500v11l2.500-2.500l2 4.500l2-1l-2-4.500h3.500z" fill="#fff" stroke="#a0a0a0" stroke-width="1.38"/></svg><svg style="left:337px;top:81px;overflow:visible" width="17" height="16" viewBox="0 0 17 17" preserveAspectRatio="none"><g transform="translate(1,1)"><path d="M0.500 8h5M11 8h5" fill="none" stroke="#ffffff" stroke-width="2.00"/><path d="M5.500 2.500v11M11 2.500v11" fill="none" stroke="#ffffff" stroke-width="2.25"/></g><path d="M0.500 8h5M11 8h5" fill="none" stroke="#a0a0a0" stroke-width="2.00"/><path d="M5.500 2.500v11M11 2.500v11" fill="none" stroke="#a0a0a0" stroke-width="2.25"/></svg><svg style="left:360px;top:81px;overflow:visible" width="17" height="16" viewBox="0 0 17 17" preserveAspectRatio="none"><g transform="translate(1,1)"><path d="M0 8h5M11 8h5" fill="none" stroke="#ffffff" stroke-width="2.00"/><path d="M5 2.500v11M10.500 2.500v11" fill="none" stroke="#ffffff" stroke-width="2.25"/><path d="M12 2.500l-8 11" fill="none" stroke="#ffffff" stroke-width="1.88"/></g><path d="M0 8h5M11 8h5" fill="none" stroke="#a0a0a0" stroke-width="2.00"/><path d="M5 2.500v11M10.500 2.500v11" fill="none" stroke="#a0a0a0" stroke-width="2.25"/><path d="M12 2.500l-8 11" fill="none" stroke="#a0a0a0" stroke-width="1.88"/></svg><svg style="left:383px;top:81px;overflow:visible" width="17" height="16" viewBox="0 0 17 17" preserveAspectRatio="none"><g transform="translate(1,1)"><path d="M1.500 3v6h4M5.500 3v10M10.500 3v10M10.500 8h5" fill="none" stroke="#ffffff" stroke-width="2.25"/></g><path d="M1.500 3v6h4M5.500 3v10M10.500 3v10M10.500 8h5" fill="none" stroke="#a0a0a0" stroke-width="2.25"/></svg><svg style="left:406px;top:81px;overflow:visible" width="17" height="16" viewBox="0 0 17 17" preserveAspectRatio="none"><g transform="translate(1,1)"><path d="M1.500 3v6h3M4.500 3v10M10.500 3v10M10.500 8h5" fill="none" stroke="#ffffff" stroke-width="2.25"/><path d="M10.500 3l-5 10" fill="none" stroke="#ffffff" stroke-width="1.88"/></g><path d="M1.500 3v6h3M4.500 3v10M10.500 3v10M10.500 8h5" fill="none" stroke="#a0a0a0" stroke-width="2.25"/><path d="M10.500 3l-5 10" fill="none" stroke="#a0a0a0" stroke-width="1.88"/></svg><svg style="left:429px;top:81px;overflow:visible" width="17" height="16" viewBox="0 0 17 17" preserveAspectRatio="none"><g transform="translate(1,1)"><path d="M8 2v12" fill="none" stroke="#ffffff" stroke-width="2.00"/></g><path d="M8 2v12" fill="none" stroke="#a0a0a0" stroke-width="2.00"/></svg><svg style="left:452px;top:81px;overflow:visible" width="17" height="16" viewBox="0 0 17 17" preserveAspectRatio="none"><g transform="translate(1,1)"><path d="M0.500 8h15" fill="none" stroke="#ffffff" stroke-width="2.00"/></g><path d="M0.500 8h15" fill="none" stroke="#a0a0a0" stroke-width="2.00"/></svg><svg style="left:475px;top:81px;overflow:visible" width="17" height="16" viewBox="0 0 17 17" preserveAspectRatio="none"><g transform="translate(1,1)"><path d="M0.500 8h3M12.500 8h3" fill="none" stroke="#ffffff" stroke-width="2.00"/><circle cx="8" cy="8" r="4.3" fill="none" stroke="#ffffff" stroke-width="2.00"/></g><path d="M0.500 8h3M12.500 8h3" fill="none" stroke="#a0a0a0" stroke-width="2.00"/><circle cx="8" cy="8" r="4.3" fill="none" stroke="#a0a0a0" stroke-width="2.00"/></svg><svg style="left:498px;top:81px;overflow:visible" width="17" height="16" viewBox="0 0 17 17" preserveAspectRatio="none"><g transform="translate(1,1)"><path d="M0.500 8h3M12.500 8h3" fill="none" stroke="#ffffff" stroke-width="2.00"/><circle cx="8" cy="8" r="4.3" fill="none" stroke="#ffffff" stroke-width="2.00"/><path d="M12.500 2.500l-9 11" fill="none" stroke="#ffffff" stroke-width="1.88"/></g><path d="M0.500 8h3M12.500 8h3" fill="none" stroke="#a0a0a0" stroke-width="2.00"/><circle cx="8" cy="8" r="4.3" fill="none" stroke="#a0a0a0" stroke-width="2.00"/><path d="M12.500 2.500l-9 11" fill="none" stroke="#a0a0a0" stroke-width="1.88"/></svg><svg style="left:521px;top:81px;overflow:visible" width="17" height="16" viewBox="0 0 17 17" preserveAspectRatio="none"><g transform="translate(1,1)"><path d="M1 3h14" fill="none" stroke="#ffffff" stroke-width="2.00"/><rect x="4.5" y="3" width="7" height="11" fill="none" stroke="#ffffff" stroke-width="1.88"/><path d="M4.500 8h7" fill="none" stroke="#ffffff" stroke-width="1.88"/></g><path d="M1 3h14" fill="none" stroke="#a0a0a0" stroke-width="2.00"/><rect x="4.5" y="3" width="7" height="11" fill="none" stroke="#a0a0a0" stroke-width="1.88"/><path d="M4.500 8h7" fill="none" stroke="#a0a0a0" stroke-width="1.88"/></svg><svg style="left:544px;top:81px;overflow:visible" width="17" height="16" viewBox="0 0 17 17" preserveAspectRatio="none"><g transform="translate(1,1)"><path d="M1 4h14M1 9h14" fill="none" stroke="#ffffff" stroke-width="2.00"/><rect x="4.5" y="2" width="7" height="12" fill="none" stroke="#ffffff" stroke-width="1.88"/><path d="M4.500 6.500h7M4.500 11.500h7" fill="none" stroke="#ffffff" stroke-width="1.50"/></g><path d="M1 4h14M1 9h14" fill="none" stroke="#a0a0a0" stroke-width="2.00"/><rect x="4.5" y="2" width="7" height="12" fill="none" stroke="#a0a0a0" stroke-width="1.88"/><path d="M4.500 6.500h7M4.500 11.500h7" fill="none" stroke="#a0a0a0" stroke-width="1.50"/></svg><svg style="left:567px;top:81px;overflow:visible" width="17" height="16" viewBox="0 0 17 17" preserveAspectRatio="none"><g transform="translate(1,1)"><path d="M1 3l5 3.500l-5 3.500z" fill="#ffffff"/><path d="M6 6.500h9M9.500 3v11M9.500 3h5.500M9.500 13.500h5.500M9.500 10h4" fill="none" stroke="#ffffff" stroke-width="1.88"/></g><path d="M1 3l5 3.500l-5 3.500z" fill="#a0a0a0"/><path d="M6 6.500h9M9.500 3v11M9.500 3h5.500M9.500 13.500h5.500M9.500 10h4" fill="none" stroke="#a0a0a0" stroke-width="1.88"/></svg><svg style="left:590px;top:81px;overflow:visible" width="17" height="16" viewBox="0 0 17 17" preserveAspectRatio="none"><g transform="translate(1,1)"><path d="M3.500 1.500v9h10" fill="none" stroke="#ffffff" stroke-width="2.00"/></g><path d="M3.500 1.500v9h10" fill="none" stroke="#a0a0a0" stroke-width="2.00"/></svg><svg style="left:613px;top:81px;overflow:visible" width="17" height="16" viewBox="0 0 17 17" preserveAspectRatio="none"><g transform="translate(1,1)"><path d="M3 1.500v9h11" fill="none" stroke="#ffffff" stroke-width="2.00"/><path d="M4 4l10 10M13 5l-8 9" fill="none" stroke="#ffffff" stroke-width="2.00"/></g><path d="M3 1.500v9h11" fill="none" stroke="#a0a0a0" stroke-width="2.00"/><path d="M4 4l10 10M13 5l-8 9" fill="none" stroke="#a0a0a0" stroke-width="2.00"/></svg><div class="" style="left:639px;top:75px;width:1px;height:28px;background:#a0a0a0;"></div><div class="" style="left:640px;top:75px;width:1px;height:28px;background:#fff;"></div><div class="grip" style="left:644px;top:76px;width:3px;height:26px;"></div><div class="grip" style="left:648px;top:76px;width:3px;height:26px;"></div><svg style="left:655px;top:81px;overflow:visible" width="17" height="16" viewBox="0 0 17 17" preserveAspectRatio="none"><g transform="translate(1,1)"><rect x="3.5" y="1.5" width="8" height="9" fill="none" stroke="#ffffff" stroke-width="1.62"/><path d="M9 1h5v2l1 1v3h-1v2h-5z" fill="#ffffff"/><path d="M3 11q-1.5 2 0 4 M4.5 11.8q2.2 -1 3 1.2q-.5 2.2 -3 2 M8 11q-1.5 2 0 4 M9.5 11.8q2.2 -1 3 1.2q-.5 2.2 -3 2 M14 11q-1.5 2 0 4" fill="none" stroke="#ffffff" stroke-width="1.56"/></g><rect x="3.5" y="1.5" width="8" height="9" fill="none" stroke="#a0a0a0" stroke-width="1.62"/><path d="M9 1h5v2l1 1v3h-1v2h-5z" fill="#a0a0a0"/><path d="M3 11q-1.5 2 0 4 M4.5 11.8q2.2 -1 3 1.2q-.5 2.2 -3 2 M8 11q-1.5 2 0 4 M9.5 11.8q2.2 -1 3 1.2q-.5 2.2 -3 2 M14 11q-1.5 2 0 4" fill="none" stroke="#a0a0a0" stroke-width="1.56"/></svg><div class="sep" style="left:679px;top:78px;width:2px;height:22px;"></div><svg style="left:686px;top:81px;overflow:visible" width="17" height="16" viewBox="0 0 17 17" preserveAspectRatio="none"><path d="M0.500 8.500l5.500-3.500l9.500 3l-6 4z" fill="#fff" stroke="#000" stroke-width="1"/><path d="M0.500 10.500l9 3.500l6-4M0.500 12.500l9 3.500l6-4M0.500 8.500v4M9.500 12v4M15.500 8v4" fill="none" stroke="#000" stroke-width="1"/><path d="M8 0v5" fill="none" stroke="#000080" stroke-width="2.6"/><path d="M4.500 4h7l-3.500 4z" fill="#000080"/></svg><svg style="left:709px;top:81px;overflow:visible" width="17" height="16" viewBox="0 0 17 17" preserveAspectRatio="none"><path d="M2 1.500h12M2 3.500h12" fill="none" stroke="#0000ff" stroke-width="1" stroke-dasharray="1 1"/><path d="M5 1v4M11 1v4" fill="none" stroke="#000080" stroke-width="2"/><path d="M2.500 5h5l-2.500 3zM8.500 5h5l-2.500 3z" fill="#000080"/><rect x="1.5" y="6.5" width="13" height="8" fill="none" stroke="#000" stroke-width="1.2"/><path d="M3 10.500h10M3 12.500h10" fill="none" stroke="#000" stroke-width="1" stroke-dasharray="1 1"/></svg><div class="sep" style="left:733px;top:78px;width:2px;height:22px;"></div><svg style="left:740px;top:81px;overflow:visible" width="17" height="16" viewBox="0 0 17 17" preserveAspectRatio="none"><g transform="translate(1,1)"><path d="M0.500 8q0-6 3.500-6t3.500 6z" fill="#ffffff"/><rect x="3" y="0.5" width="2" height="2" fill="#ffffff"/><rect x="6.5" y="4.5" width="8" height="10" fill="#fff" stroke="#ffffff" stroke-width="1.50"/><path d="M8.500 7h4l-4 4h4M8.500 13h4" fill="none" stroke="#ffffff" stroke-width="1.25"/></g><path d="M0.500 8q0-6 3.500-6t3.500 6z" fill="#a0a0a0"/><rect x="3" y="0.5" width="2" height="2" fill="#a0a0a0"/><rect x="6.5" y="4.5" width="8" height="10" fill="#fff" stroke="#a0a0a0" stroke-width="1.50"/><path d="M8.500 7h4l-4 4h4M8.500 13h4" fill="none" stroke="#a0a0a0" stroke-width="1.25"/></svg><svg style="left:763px;top:81px;overflow:visible" width="17" height="16" viewBox="0 0 17 17" preserveAspectRatio="none"><g transform="translate(1,1)"><path d="M0.500 8q0-6 3.500-6t3.500 6z" fill="#ffffff"/><rect x="3" y="0.5" width="2" height="2" fill="#ffffff"/><rect x="6.5" y="4.5" width="8" height="10" fill="#fff" stroke="#ffffff" stroke-width="1.50"/><path d="M7 5l7 9M14 5l-7 9" fill="none" stroke="#ffffff" stroke-width="1.50"/></g><path d="M0.500 8q0-6 3.500-6t3.500 6z" fill="#a0a0a0"/><rect x="3" y="0.5" width="2" height="2" fill="#a0a0a0"/><rect x="6.5" y="4.5" width="8" height="10" fill="#fff" stroke="#a0a0a0" stroke-width="1.50"/><path d="M7 5l7 9M14 5l-7 9" fill="none" stroke="#a0a0a0" stroke-width="1.50"/></svg><svg style="left:786px;top:81px;overflow:visible" width="17" height="16" viewBox="0 0 17 17" preserveAspectRatio="none"><g transform="translate(1,1)"><path d="M0.500 8q0-6 3.500-6t3.500 6z" fill="#ffffff"/><rect x="3" y="0.5" width="2" height="2" fill="#ffffff"/><rect x="7.5" y="4.5" width="8" height="10" fill="#fff" stroke="#ffffff" stroke-width="1.50"/><path d="M9 10l2 2.500l3-6" fill="none" stroke="#ffffff" stroke-width="1.62"/><path d="M3.500 8v5M1.500 11l2 2.500l2-2.500M1 14.500h5" fill="none" stroke="#ffffff" stroke-width="1.25"/></g><path d="M0.500 8q0-6 3.500-6t3.500 6z" fill="#a0a0a0"/><rect x="3" y="0.5" width="2" height="2" fill="#a0a0a0"/><rect x="7.5" y="4.5" width="8" height="10" fill="#fff" stroke="#a0a0a0" stroke-width="1.50"/><path d="M9 10l2 2.500l3-6" fill="none" stroke="#a0a0a0" stroke-width="1.62"/><path d="M3.500 8v5M1.500 11l2 2.500l2-2.500M1 14.500h5" fill="none" stroke="#a0a0a0" stroke-width="1.25"/></svg><svg style="left:809px;top:81px;overflow:visible" width="17" height="16" viewBox="0 0 17 17" preserveAspectRatio="none"><g transform="translate(1,1)"><path d="M0.500 8q0-6 3.500-6t3.500 6z" fill="#ffffff"/><rect x="3" y="0.5" width="2" height="2" fill="#ffffff"/><rect x="7.5" y="4.5" width="8" height="10" fill="#fff" stroke="#ffffff" stroke-width="1.50"/><path d="M1 11.500h5M4 9.500l2 2l-2 2" fill="none" stroke="#ffffff" stroke-width="1.50"/><rect x="9.5" y="10" width="3" height="2" fill="#ffffff"/></g><path d="M0.500 8q0-6 3.500-6t3.500 6z" fill="#a0a0a0"/><rect x="3" y="0.5" width="2" height="2" fill="#a0a0a0"/><rect x="7.5" y="4.5" width="8" height="10" fill="#fff" stroke="#a0a0a0" stroke-width="1.50"/><path d="M1 11.500h5M4 9.500l2 2l-2 2" fill="none" stroke="#a0a0a0" stroke-width="1.50"/><rect x="9.5" y="10" width="3" height="2" fill="#a0a0a0"/></svg><div class="sep" style="left:833px;top:78px;width:2px;height:22px;"></div><svg style="left:840px;top:81px;overflow:visible" width="17" height="16" viewBox="0 0 17 17" preserveAspectRatio="none"><path d="M2.500 1v13" fill="none" stroke="#000" stroke-width="1.5"/><rect x="2.5" y="2.5" width="4" height="3.5" fill="#ffff00" stroke="#000" stroke-width="1"/><rect x="2.5" y="7" width="4" height="3.5" fill="#ffff00" stroke="#000" stroke-width="1"/><rect x="2.5" y="11.5" width="4" height="3.5" fill="#ffff00" stroke="#000" stroke-width="1"/><rect x="1.5" y="0.5" width="3" height="2" fill="#ffff00" stroke="#000" stroke-width="1"/><rect x="10" y="1.5" width="5" height="3.5" fill="#00ffff" stroke="#0000ff" stroke-width="1.3"/><rect x="10" y="6.5" width="5" height="3.5" fill="#00ffff" stroke="#0000ff" stroke-width="1.3"/><rect x="10" y="11.5" width="5" height="3.5" fill="#00ffff" stroke="#0000ff" stroke-width="1.3"/></svg><div class="sep" style="left:864px;top:78px;width:2px;height:22px;"></div><svg style="left:871px;top:81px;overflow:visible" width="17" height="16" viewBox="0 0 17 17" preserveAspectRatio="none"><rect x="0.5" y="0.5" width="15" height="9.5" fill="#00ffff" stroke="#000" stroke-width="1.2"/><path d="M3.500 1v8.500" fill="none" stroke="#008000" stroke-width="1.5"/><path d="M5.500 2v6M9 2v6M5.500 5h3.500M11 2v6M14.500 2v6M11 5h3.500" fill="none" stroke="#000" stroke-width="1.2"/><path d="M1 15.500q-1-2 1-4M3 12.500q2-1.500 3 .5t-2 2.500M7 15.500q-1-2 1-4M9 12.500q2-1.500 3 .5t-2 2.500M14.500 11.500q1.500 2 0 4" fill="none" stroke="#000" stroke-width="1.2"/></svg><svg style="left:894px;top:81px;overflow:visible" width="17" height="16" viewBox="0 0 17 17" preserveAspectRatio="none"><g transform="translate(1,1)"><path d="M0.500 0.500h12v3h-8v11.500h-4z" fill="#ffffff"/><rect x="5" y="3.5" width="10" height="11" fill="#fff" stroke="#ffffff" stroke-width="1.50"/><path d="M7.500 6h5l-5 5h5M7.500 13h5" fill="none" stroke="#ffffff" stroke-width="1.25"/></g><path d="M0.500 0.500h12v3h-8v11.500h-4z" fill="#a0a0a0"/><rect x="5" y="3.5" width="10" height="11" fill="#fff" stroke="#a0a0a0" stroke-width="1.50"/><path d="M7.500 6h5l-5 5h5M7.500 13h5" fill="none" stroke="#a0a0a0" stroke-width="1.25"/></svg><svg style="left:917px;top:81px;overflow:visible" width="17" height="16" viewBox="0 0 17 17" preserveAspectRatio="none"><g transform="translate(1,1)"><path d="M0.500 0.500h12v3h-8v11.500h-4z" fill="#ffffff"/><rect x="5" y="3.5" width="10" height="11" fill="#fff" stroke="#ffffff" stroke-width="1.50"/><path d="M6.500 4.500l7 9M13.500 4.500l-7 9" fill="none" stroke="#ffffff" stroke-width="1.50"/></g><path d="M0.500 0.500h12v3h-8v11.500h-4z" fill="#a0a0a0"/><rect x="5" y="3.5" width="10" height="11" fill="#fff" stroke="#a0a0a0" stroke-width="1.50"/><path d="M6.500 4.500l7 9M13.500 4.500l-7 9" fill="none" stroke="#a0a0a0" stroke-width="1.50"/></svg><svg style="left:940px;top:81px;overflow:visible" width="17" height="16" viewBox="0 0 17 17" preserveAspectRatio="none"><g transform="translate(1,1)"><path d="M0.500 0.500h12v3h-8v11.500h-4z" fill="#ffffff"/><rect x="5" y="3.5" width="10" height="11" fill="#fff" stroke="#ffffff" stroke-width="1.50"/><path d="M8 10l2 2.500l3-7" fill="none" stroke="#ffffff" stroke-width="1.88"/></g><path d="M0.500 0.500h12v3h-8v11.500h-4z" fill="#a0a0a0"/><rect x="5" y="3.5" width="10" height="11" fill="#fff" stroke="#a0a0a0" stroke-width="1.50"/><path d="M8 10l2 2.500l3-7" fill="none" stroke="#a0a0a0" stroke-width="1.88"/></svg><div class="" style="left:966px;top:75px;width:1px;height:28px;background:#a0a0a0;"></div><div class="" style="left:967px;top:75px;width:1px;height:28px;background:#fff;"></div><div class="grip" style="left:970px;top:76px;width:3px;height:26px;"></div><div class="grip" style="left:974px;top:76px;width:3px;height:26px;"></div><svg style="left:981px;top:81px;overflow:visible" width="17" height="16" viewBox="0 0 17 17" preserveAspectRatio="none"><g transform="translate(1,1)"><path d="M8 1v14" fill="none" stroke="#ffffff" stroke-width="1.25" stroke-dasharray="1 1"/><path d="M6 3.500h9M9 6.500h6M6 9.500h9M9 12.500h6" fill="none" stroke="#ffffff" stroke-width="1.62"/><path d="M0.500 6.500h7M3.500 4l-3 2.500l3 2.500" fill="none" stroke="#ffffff" stroke-width="1.50"/></g><path d="M8 1v14" fill="none" stroke="#a0a0a0" stroke-width="1.25" stroke-dasharray="1 1"/><path d="M6 3.500h9M9 6.500h6M6 9.500h9M9 12.500h6" fill="none" stroke="#a0a0a0" stroke-width="1.62"/><path d="M0.500 6.500h7M3.500 4l-3 2.500l3 2.500" fill="none" stroke="#a0a0a0" stroke-width="1.50"/></svg><svg style="left:1004px;top:81px;overflow:visible" width="17" height="16" viewBox="0 0 17 17" preserveAspectRatio="none"><g transform="translate(1,1)"><path d="M6 1v14" fill="none" stroke="#ffffff" stroke-width="1.25" stroke-dasharray="1 1"/><path d="M7 3.500h9M9 6.500h7M7 9.500h9M9 12.500h7" fill="none" stroke="#ffffff" stroke-width="1.62"/><path d="M0.500 6.500h7M4.500 4l3 2.500l-3 2.500" fill="none" stroke="#ffffff" stroke-width="1.50"/></g><path d="M6 1v14" fill="none" stroke="#a0a0a0" stroke-width="1.25" stroke-dasharray="1 1"/><path d="M7 3.500h9M9 6.500h7M7 9.500h9M9 12.500h7" fill="none" stroke="#a0a0a0" stroke-width="1.62"/><path d="M0.500 6.500h7M4.500 4l3 2.500l-3 2.500" fill="none" stroke="#a0a0a0" stroke-width="1.50"/></svg><div class="sep" style="left:1028px;top:78px;width:2px;height:22px;"></div><svg style="left:1035px;top:81px;overflow:visible" width="17" height="16" viewBox="0 0 17 17" preserveAspectRatio="none"><g transform="translate(1,1)"><path d="M1 1.500h13M4 4.500h10M4 7.500h10M4 10.500h10M2 13.500h12" fill="none" stroke="#ffffff" stroke-width="1.50"/></g><path d="M1 1.500h13M4 4.500h10M4 7.500h10M4 10.500h10M2 13.500h12" fill="none" stroke="#a0a0a0" stroke-width="1.50"/></svg><svg style="left:1058px;top:81px;overflow:visible" width="17" height="16" viewBox="0 0 17 17" preserveAspectRatio="none"><g transform="translate(1,1)"><path d="M3 3.500q4-4 8-1q2 3-2 3.500h-6" fill="none" stroke="#ffffff" stroke-width="1.50"/><path d="M2.500 1v3.500h3.500" fill="none" stroke="#ffffff" stroke-width="1.88"/><path d="M5 8.500h10M5 11.500h10M2 14.500h13" fill="none" stroke="#ffffff" stroke-width="1.50"/></g><path d="M3 3.500q4-4 8-1q2 3-2 3.500h-6" fill="none" stroke="#a0a0a0" stroke-width="1.50"/><path d="M2.500 1v3.500h3.500" fill="none" stroke="#a0a0a0" stroke-width="1.88"/><path d="M5 8.500h10M5 11.500h10M2 14.500h13" fill="none" stroke="#a0a0a0" stroke-width="1.50"/></svg><div class="sep" style="left:1082px;top:78px;width:2px;height:22px;"></div><svg style="left:1089px;top:81px;overflow:visible" width="17" height="16" viewBox="0 0 17 17" preserveAspectRatio="none"><g transform="translate(1,1)"><path d="M1 14l10-11" fill="none" stroke="#ffffff" stroke-width="1.50"/><path d="M9 3.500l5 2.500v5l-5 2l-3.500-5z" fill="#ffffff"/></g><path d="M1 14l10-11" fill="none" stroke="#a0a0a0" stroke-width="1.50"/><path d="M9 3.500l5 2.500v5l-5 2l-3.500-5z" fill="#a0a0a0"/></svg><svg style="left:1112px;top:81px;overflow:visible" width="17" height="16" viewBox="0 0 17 17" preserveAspectRatio="none"><g transform="translate(1,1)"><path d="M4 14.500l10-11" fill="none" stroke="#ffffff" stroke-width="1.50"/><path d="M9 7l4-1l3 4l-4 4l-4-3z" fill="#ffffff"/><path d="M3 3q4-4 7 1" fill="none" stroke="#ffffff" stroke-width="1.50"/><path d="M1.500 0.500v4h4" fill="none" stroke="#ffffff" stroke-width="1.75"/></g><path d="M4 14.500l10-11" fill="none" stroke="#a0a0a0" stroke-width="1.50"/><path d="M9 7l4-1l3 4l-4 4l-4-3z" fill="#a0a0a0"/><path d="M3 3q4-4 7 1" fill="none" stroke="#a0a0a0" stroke-width="1.50"/><path d="M1.500 0.500v4h4" fill="none" stroke="#a0a0a0" stroke-width="1.75"/></svg><svg style="left:1135px;top:81px;overflow:visible" width="17" height="16" viewBox="0 0 17 17" preserveAspectRatio="none"><g transform="translate(1,1)"><path d="M2 14.500l10-11" fill="none" stroke="#ffffff" stroke-width="1.50"/><path d="M9 7l4-1l3 4l-4 4l-4-3z" fill="#ffffff"/><path d="M3 4q3-5 7-1" fill="none" stroke="#ffffff" stroke-width="1.50"/><path d="M7 4.500h4v-4" fill="none" stroke="#ffffff" stroke-width="1.75"/></g><path d="M2 14.500l10-11" fill="none" stroke="#a0a0a0" stroke-width="1.50"/><path d="M9 7l4-1l3 4l-4 4l-4-3z" fill="#a0a0a0"/><path d="M3 4q3-5 7-1" fill="none" stroke="#a0a0a0" stroke-width="1.50"/><path d="M7 4.500h4v-4" fill="none" stroke="#a0a0a0" stroke-width="1.75"/></svg><svg style="left:1158px;top:81px;overflow:visible" width="17" height="16" viewBox="0 0 17 17" preserveAspectRatio="none"><g transform="translate(1,1)"><path d="M1 14.500l10-11" fill="none" stroke="#ffffff" stroke-width="1.50"/><path d="M9 7l4-1l3 4l-4 4l-4-3z" fill="#ffffff"/><path d="M3 1l9 9M2 5h9" fill="none" stroke="#ffffff" stroke-width="1.75"/></g><path d="M1 14.500l10-11" fill="none" stroke="#a0a0a0" stroke-width="1.50"/><path d="M9 7l4-1l3 4l-4 4l-4-3z" fill="#a0a0a0"/><path d="M3 1l9 9M2 5h9" fill="none" stroke="#a0a0a0" stroke-width="1.75"/></svg><div class="" style="left:1184px;top:75px;width:1px;height:28px;background:#a0a0a0;"></div><div class="" style="left:1185px;top:75px;width:1px;height:28px;background:#fff;"></div><div class="grip" style="left:3px;top:106px;width:3px;height:26px;"></div><div class="grip" style="left:7px;top:106px;width:3px;height:26px;"></div><div class="pressed" style="left:11px;top:108px;width:23px;height:22px;"></div><svg style="left:15px;top:112px;overflow:visible" width="17" height="16" viewBox="0 0 17 17" preserveAspectRatio="none"><rect x="0.5" y="1.5" width="13" height="11" fill="#fff" stroke="#000" stroke-width="1.1"/><rect x="0" y="1" width="14" height="2.3" fill="#000080"/><rect x="1.5" y="1.5" width="1" height="1" fill="#fff"/><path d="M4.500 4v8.500" fill="none" stroke="#000" stroke-width="1"/><path d="M6.500 9.500h3.500l1 1.500h4.500v4.500h-9z" fill="#ffff00" stroke="#000" stroke-width="1.1"/><path d="M7 13h8" fill="none" stroke="#fff" stroke-width="0.8" stroke-dasharray="1 1"/></svg><svg style="left:37px;top:111px;overflow:visible" width="17" height="16" viewBox="0 0 17 17" preserveAspectRatio="none"><rect x="2.5" y="0.5" width="12" height="10" fill="#fff" stroke="#000" stroke-width="1.1"/><rect x="2" y="0" width="13" height="2.3" fill="#000080"/><path d="M1 14.500l7-8" fill="none" stroke="#000" stroke-width="2.2"/><path d="M1.500 14l6.500-7.500" fill="none" stroke="#ff0000" stroke-width="0.8"/><path d="M5 3.500l3-2l5 3v2.500l-2-1l-2 2.500l-4-3z" fill="#808000" stroke="#000" stroke-width="1"/></svg><svg style="left:60px;top:111px;overflow:visible" width="17" height="16" viewBox="0 0 17 17" preserveAspectRatio="none"><rect x="3.5" y="0.5" width="12" height="9" fill="#fff" stroke="#000" stroke-width="1.1"/><rect x="3" y="0" width="13" height="2.3" fill="#000080"/><path d="M5 4.500h3M10 4.500h2M8 9l4-3.500M10 5.500h2v2" fill="none" stroke="#a0a0a0" stroke-width="0.9"/><path d="M4 9l-1.500 3M9.500 9l1.500 3M5.500 12.500h3" fill="none" stroke="#000" stroke-width="1.2"/><circle cx="3" cy="13" r="2" fill="#00ffff" stroke="#000" stroke-width="1.2"/><circle cx="10" cy="13" r="2" fill="#00ffff" stroke="#000" stroke-width="1.2"/></svg><svg style="left:83px;top:111px;overflow:visible" width="17" height="16" viewBox="0 0 17 17" preserveAspectRatio="none"><rect x="1.5" y="0.5" width="12" height="9" fill="#fff" stroke="#000" stroke-width="1.1"/><rect x="1" y="0" width="13" height="2.3" fill="#000080"/><path d="M4.500 7v-2h2M11.500 7v-2h-2M7.500 6.500l2-1.500" fill="none" stroke="#0000ff" stroke-width="1.3"/><rect x="1.5" y="8.5" width="4.5" height="6" fill="#fff" stroke="#000" stroke-width="1.2"/><rect x="9.5" y="8.5" width="4.5" height="6" fill="#fff" stroke="#000" stroke-width="1.2"/><path d="M2.500 8.500l1-1.500h2M10.500 8.500l1-1.500h2" fill="none" stroke="#000" stroke-width="1"/></svg><svg style="left:106px;top:111px;overflow:visible" width="17" height="16" viewBox="0 0 17 17" preserveAspectRatio="none"><rect x="3.5" y="0.5" width="12" height="11" fill="#fff" stroke="#000" stroke-width="1.1"/><rect x="3" y="0" width="13" height="2.3" fill="#000080"/><path d="M5 4h9M5 6h9M5 8h9M5 10h9" fill="none" stroke="#a0a0a0" stroke-width="0.6" stroke-dasharray="1 1"/><path d="M6.500 3v9" fill="none" stroke="#000" stroke-width="1"/><rect x="1.5" y="8.5" width="4" height="6" fill="#fff" stroke="#000" stroke-width="1.3"/><path d="M0.500 10.500h1.500M0.500 12.500h1.500" fill="none" stroke="#000" stroke-width="1"/></svg><svg style="left:129px;top:111px;overflow:visible" width="17" height="16" viewBox="0 0 17 17" preserveAspectRatio="none"><rect x="1.5" y="6.5" width="11" height="8.5" fill="#fff" stroke="#000" stroke-width="1.3"/><path d="M3.500 9.500h6M3.500 12h2M6.500 12h4" fill="none" stroke="#000" stroke-width="1.2"/><path d="M4 6.500l4.500-5l5 5.500l-3 3" fill="#fff" stroke="#000" stroke-width="1"/><path d="M6 6l3-3l3 3l-2.500 2.500" fill="none" stroke="#000" stroke-width="0.8" stroke-dasharray="1 1"/><path d="M12 2.500h3.500v5.500l-1.500-2.500z" fill="#000080"/><path d="M15 1v8" fill="none" stroke="#000080" stroke-width="1.3"/></svg><div class="sep" style="left:153px;top:108px;width:2px;height:22px;"></div><svg style="left:160px;top:111px;overflow:visible" width="17" height="16" viewBox="0 0 17 17" preserveAspectRatio="none"><path d="M4 1l8 6.500M12 1l-8 6.500" fill="none" stroke="#0000ff" stroke-width="1"/><path d="M2.500 2.500q1-1.500 2-1M13.500 2.500q-1-1.500-2-1" fill="none" stroke="#000" stroke-width="1"/><path d="M1.5 7.5h3l2 2v5h-5z M4.5 7.5v2h2" fill="#fff" stroke="#000" stroke-width="1"/><path d="M9.5 7.5h3l2 2v5h-5z M12.5 7.5v2h2" fill="#fff" stroke="#000" stroke-width="1"/></svg><svg style="left:183px;top:111px;overflow:visible" width="17" height="16" viewBox="0 0 17 17" preserveAspectRatio="none"><path d="M2.500 1.500h9.500l2.500 2.500l-2.500 2.500h-9.500z" fill="#ffff60" stroke="#808000" stroke-width="1.1"/><path d="M4 3.200h6M4 4.800h6" fill="none" stroke="#fff" stroke-width="0.8" stroke-dasharray="1 1"/><circle cx="12" cy="4" r="0.9" fill="#000"/><path d="M13 5.500q2 2 0 4.500" fill="none" stroke="#000" stroke-width="1"/><path d="M2 13.500q-1-2 1-4M4 10.500q2-1 3 .5t-2 2.500M8 13.500q-1-2 1-4M10 10.500q2-1 3 .5t-2 2.500" fill="none" stroke="#000" stroke-width="1.2"/><path d="M2 15h1.500M5.500 15h1.500M8.500 15h1.500M12 15h1.500" fill="none" stroke="#000" stroke-width="1"/></svg><svg style="left:206px;top:111px;overflow:visible" width="17" height="16" viewBox="0 0 17 17" preserveAspectRatio="none"><path d="M1.500 0.500h13.500v9.500l-1 .5v1.500h-1.500v1.500h-2l-1 1h-3l-1.500 1h-3.500z" fill="#fff" stroke="#000" stroke-width="1.3"/><path d="M4.500 1.500v11.500" fill="none" stroke="#008000" stroke-width="1.3"/><path d="M6.500 2.500v5M6.500 5h4M10.500 2.500v5M13 2.500v5M13 5h2" fill="none" stroke="#000" stroke-width="1.2"/></svg><svg style="left:229px;top:111px;overflow:visible" width="17" height="16" viewBox="0 0 17 17" preserveAspectRatio="none"><g transform="translate(1,1)"><rect x="1.5" y="1.5" width="13" height="13" fill="#fff" stroke="#ffffff" stroke-width="1.50"/><path d="M2 4.500h12" fill="none" stroke="#ffffff" stroke-width="1.25"/><rect x="4.5" y="6.5" width="7" height="2.5" fill="none" stroke="#ffffff" stroke-width="1.25"/><path d="M4 11.500h1.500M7 11.500h5M4 13.200h1.500M7 13.200h5" fill="none" stroke="#ffffff" stroke-width="1.25"/></g><rect x="1.5" y="1.5" width="13" height="13" fill="#fff" stroke="#a0a0a0" stroke-width="1.50"/><path d="M2 4.500h12" fill="none" stroke="#a0a0a0" stroke-width="1.25"/><rect x="4.5" y="6.5" width="7" height="2.5" fill="none" stroke="#a0a0a0" stroke-width="1.25"/><path d="M4 11.500h1.500M7 11.500h5M4 13.200h1.500M7 13.200h5" fill="none" stroke="#a0a0a0" stroke-width="1.25"/></svg><svg style="left:252px;top:111px;overflow:visible" width="17" height="16" viewBox="0 0 17 17" preserveAspectRatio="none"><rect x="1.5" y="1.5" width="13" height="13" fill="#fff" stroke="#000" stroke-width="1.4"/><path d="M2 3.500h12" fill="none" stroke="#000" stroke-width="1"/><text x="3" y="9.3" font-size="6.5" font-weight="bold" font-family="'Liberation Mono',sans-serif" fill="#0000ff"  textLength="10.5" lengthAdjust="spacingAndGlyphs">001</text><text x="3" y="14" font-size="6.5" font-weight="bold" font-family="'Liberation Mono',sans-serif" fill="#0000ff"  textLength="10.5" lengthAdjust="spacingAndGlyphs">002</text></svg><div class="sep" style="left:276px;top:108px;width:2px;height:22px;"></div><svg style="left:283px;top:111px;overflow:visible" width="17" height="16" viewBox="0 0 17 17" preserveAspectRatio="none"><g transform="translate(1,1)"><text x="1" y="9.5" font-size="13.5" font-weight="bold" font-family="'Liberation Serif',sans-serif" fill="#ffffff"  textLength="14.500" lengthAdjust="spacingAndGlyphs">10</text><path d="M3 11q-1.5 2 0 4 M4.5 11.8q2.2 -1 3 1.2q-.5 2.2 -3 2 M8 11q-1.5 2 0 4 M9.5 11.8q2.2 -1 3 1.2q-.5 2.2 -3 2 M14 11q-1.5 2 0 4" fill="none" stroke="#ffffff" stroke-width="1.56"/></g><text x="1" y="9.5" font-size="13.5" font-weight="bold" font-family="'Liberation Serif',sans-serif" fill="#a0a0a0"  textLength="14.500" lengthAdjust="spacingAndGlyphs">10</text><path d="M3 11q-1.5 2 0 4 M4.5 11.8q2.2 -1 3 1.2q-.5 2.2 -3 2 M8 11q-1.5 2 0 4 M9.5 11.8q2.2 -1 3 1.2q-.5 2.2 -3 2 M14 11q-1.5 2 0 4" fill="none" stroke="#a0a0a0" stroke-width="1.56"/></svg><svg style="left:306px;top:111px;overflow:visible" width="17" height="16" viewBox="0 0 17 17" preserveAspectRatio="none"><g transform="translate(1,1)"><text x="1" y="9.5" font-size="13.5" font-weight="bold" font-family="'Liberation Serif',sans-serif" fill="#ffffff"  textLength="14.500" lengthAdjust="spacingAndGlyphs">10</text><path d="M0.500 8l15-2.500M0.500 10l15-2" fill="none" stroke="#ffffff" stroke-width="1.50"/><path d="M3 11q-1.5 2 0 4 M4.5 11.8q2.2 -1 3 1.2q-.5 2.2 -3 2 M8 11q-1.5 2 0 4 M9.5 11.8q2.2 -1 3 1.2q-.5 2.2 -3 2 M14 11q-1.5 2 0 4" fill="none" stroke="#ffffff" stroke-width="1.56"/></g><text x="1" y="9.5" font-size="13.5" font-weight="bold" font-family="'Liberation Serif',sans-serif" fill="#a0a0a0"  textLength="14.500" lengthAdjust="spacingAndGlyphs">10</text><path d="M0.500 8l15-2.500M0.500 10l15-2" fill="none" stroke="#a0a0a0" stroke-width="1.50"/><path d="M3 11q-1.5 2 0 4 M4.5 11.8q2.2 -1 3 1.2q-.5 2.2 -3 2 M8 11q-1.5 2 0 4 M9.5 11.8q2.2 -1 3 1.2q-.5 2.2 -3 2 M14 11q-1.5 2 0 4" fill="none" stroke="#a0a0a0" stroke-width="1.56"/></svg><div class="pressed" style="left:326px;top:108px;width:23px;height:22px;"></div><svg style="left:330px;top:112px;overflow:visible" width="17" height="16" viewBox="0 0 17 17" preserveAspectRatio="none"><g transform="translate(1,1)"><text x="1" y="9.5" font-size="13.5" font-weight="bold" font-family="'Liberation Serif',sans-serif" fill="#ffffff"  textLength="14.500" lengthAdjust="spacingAndGlyphs">16</text><path d="M3 11q-1.5 2 0 4 M4.5 11.8q2.2 -1 3 1.2q-.5 2.2 -3 2 M8 11q-1.5 2 0 4 M9.5 11.8q2.2 -1 3 1.2q-.5 2.2 -3 2 M14 11q-1.5 2 0 4" fill="none" stroke="#ffffff" stroke-width="1.56"/></g><text x="1" y="9.5" font-size="13.5" font-weight="bold" font-family="'Liberation Serif',sans-serif" fill="#a0a0a0"  textLength="14.500" lengthAdjust="spacingAndGlyphs">16</text><path d="M3 11q-1.5 2 0 4 M4.5 11.8q2.2 -1 3 1.2q-.5 2.2 -3 2 M8 11q-1.5 2 0 4 M9.5 11.8q2.2 -1 3 1.2q-.5 2.2 -3 2 M14 11q-1.5 2 0 4" fill="none" stroke="#a0a0a0" stroke-width="1.56"/></svg><div class="sep" style="left:353px;top:108px;width:2px;height:22px;"></div><svg style="left:360px;top:111px;overflow:visible" width="17" height="16" viewBox="0 0 17 17" preserveAspectRatio="none"><g transform="translate(1,1)"><path d="M6 0l-5 5.500l3.500 1l.5 8.500h8.500v-11.500h-3z" fill="#ffffff"/><path d="M13 5h3M13 7.500h3M2.500 11.500h3" fill="none" stroke="#ffffff" stroke-width="1.25"/></g><path d="M6 0l-5 5.500l3.500 1l.5 8.500h8.500v-11.500h-3z" fill="#a0a0a0"/><path d="M13 5h3M13 7.500h3M2.500 11.500h3" fill="none" stroke="#a0a0a0" stroke-width="1.25"/></svg><svg style="left:383px;top:111px;overflow:visible" width="17" height="16" viewBox="0 0 17 17" preserveAspectRatio="none"><g transform="translate(1,1)"><path d="M2 0.500h5l3 3h4v11.500h-8.500v-4.500l-3.500-4h2v-1.500l-2-2z" fill="#ffffff"/><path d="M13 5.500h3M13 8h3M2.500 12h3" fill="none" stroke="#ffffff" stroke-width="1.25"/></g><path d="M2 0.500h5l3 3h4v11.500h-8.500v-4.500l-3.500-4h2v-1.500l-2-2z" fill="#a0a0a0"/><path d="M13 5.500h3M13 8h3M2.500 12h3" fill="none" stroke="#a0a0a0" stroke-width="1.25"/></svg><svg style="left:406px;top:111px;overflow:visible" width="17" height="16" viewBox="0 0 17 17" preserveAspectRatio="none"><g transform="translate(1,1)"><rect x="3" y="0.5" width="5.5" height="9" fill="#d0d0d0"/><path d="M10 0.500h5.500v2l-1 1l1 1v3l-1.500 1h-3l-1-2z" fill="#ffffff"/><path d="M0 5.500h4M0 8h4" fill="none" stroke="#ffffff" stroke-width="1.25"/><path d="M3 10.5q-1.5 2 0 4 M4.5 11.3q2.2 -1 3 1.2q-.5 2.2 -3 2 M8 10.5q-1.5 2 0 4 M9.5 11.3q2.2 -1 3 1.2q-.5 2.2 -3 2 M14 10.5q-1.5 2 0 4" fill="none" stroke="#ffffff" stroke-width="1.56"/></g><rect x="3" y="0.5" width="5.5" height="9" fill="#d0d0d0"/><path d="M10 0.500h5.500v2l-1 1l1 1v3l-1.500 1h-3l-1-2z" fill="#a0a0a0"/><path d="M0 5.500h4M0 8h4" fill="none" stroke="#a0a0a0" stroke-width="1.25"/><path d="M3 10.5q-1.5 2 0 4 M4.5 11.3q2.2 -1 3 1.2q-.5 2.2 -3 2 M8 10.5q-1.5 2 0 4 M9.5 11.3q2.2 -1 3 1.2q-.5 2.2 -3 2 M14 10.5q-1.5 2 0 4" fill="none" stroke="#a0a0a0" stroke-width="1.56"/></svg><div class="" style="left:432px;top:105px;width:1px;height:28px;background:#a0a0a0;"></div><div class="" style="left:433px;top:105px;width:1px;height:28px;background:#fff;"></div><div class="grip" style="left:437px;top:106px;width:3px;height:26px;"></div><div class="grip" style="left:441px;top:106px;width:3px;height:26px;"></div><svg style="left:448px;top:111px;overflow:visible" width="17" height="16" viewBox="0 0 17 17" preserveAspectRatio="none"><rect x="0.8" y="0.8" width="14.500" height="14" rx="2" fill="#fff" stroke="#000" stroke-width="1.600"/><rect x="1.5" y="1.5" width="13" height="6.5" fill="#000"/><rect x="2.5" y="2" width="8" height="5" fill="#00ffff"/><rect x="2.5" y="11" width="2.5" height="1.5" fill="#000"/><path d="M2 9.500h12" fill="none" stroke="#000" stroke-width="1"/><path d="M9.500 6v-1.500q0-1.500 1.500-1.500t1.500 1.500v1.500" fill="none" stroke="#000" stroke-width="1.1"/><rect x="8.5" y="5.5" width="5" height="4.5" fill="#ffff00" stroke="#000" stroke-width="1"/></svg><svg style="left:471px;top:111px;overflow:visible" width="17" height="16" viewBox="0 0 17 17" preserveAspectRatio="none"><path d="M2.500 4v-1.500q0-1.500 1.500-1.500t1.500 1.500v1.500" fill="none" stroke="#000" stroke-width="1.1"/><rect x="1.5" y="4" width="5" height="4" fill="#ffff00" stroke="#000" stroke-width="1"/><path d="M7 1.500h7.500v9M4.500 8.500v3h3" fill="none" stroke="#000" stroke-width="1.6"/><rect x="5.5" y="5.5" width="7" height="6" fill="#fff" stroke="#000" stroke-width="1.2"/><rect x="7.5" y="7" width="3" height="2.5" fill="#0000ff"/><path d="M3 13.500h11l1-2" fill="#fff" stroke="#000" stroke-width="1.5"/></svg><div class="sep" style="left:495px;top:108px;width:2px;height:22px;"></div><svg style="left:502px;top:111px;overflow:visible" width="17" height="16" viewBox="0 0 17 17" preserveAspectRatio="none"><g transform="translate(1,1)"><path d="M1 2.500h9M1 5h9M1 7.500h9" fill="none" stroke="#ffffff" stroke-width="1.75"/><rect x="1.5" y="1" width="9" height="8.5" fill="none" stroke="#ffffff" stroke-width="1.25"/><path d="M3 11.500h9M6 9.500v2" fill="none" stroke="#ffffff" stroke-width="1.62"/><path d="M9 6.500h5.500v5q-1 3-3 3.500q-2-.5-2.500-3.500z" fill="#fff" stroke="#ffffff" stroke-width="1.50"/><circle cx="12" cy="10.5" r="1.6" fill="#ffffff"/></g><path d="M1 2.500h9M1 5h9M1 7.500h9" fill="none" stroke="#a0a0a0" stroke-width="1.75"/><rect x="1.5" y="1" width="9" height="8.5" fill="none" stroke="#a0a0a0" stroke-width="1.25"/><path d="M3 11.500h9M6 9.500v2" fill="none" stroke="#a0a0a0" stroke-width="1.62"/><path d="M9 6.500h5.500v5q-1 3-3 3.500q-2-.5-2.500-3.500z" fill="#fff" stroke="#a0a0a0" stroke-width="1.50"/><circle cx="12" cy="10.5" r="1.6" fill="#a0a0a0"/></svg><div class="sep" style="left:526px;top:108px;width:2px;height:22px;"></div><svg style="left:533px;top:111px;overflow:visible" width="17" height="16" viewBox="0 0 17 17" preserveAspectRatio="none"><g transform="translate(1,1)"><path d="M4.500 9.500v-6q0-1 1-1t1 1v4v-5.500q0-1 1-1t1 1v5.500v-5q0-1 1-1t1 1v5v-3.500q0-1 1-1t1 1v7q0 4-3.500 5h-2.500q-2-1-4.500-6q-.5-1.500 .5-1.500t2 1.500z" fill="#fff" stroke="#ffffff" stroke-width="1.25"/><path d="M8.500 10.500v4h3M11.500 11l2.500 2l-2.500 2z" fill="#ffffff" stroke="#ffffff" stroke-width="1.25"/></g><path d="M4.500 9.500v-6q0-1 1-1t1 1v4v-5.500q0-1 1-1t1 1v5.500v-5q0-1 1-1t1 1v5v-3.500q0-1 1-1t1 1v7q0 4-3.500 5h-2.500q-2-1-4.500-6q-.5-1.500 .5-1.500t2 1.500z" fill="#fff" stroke="#a0a0a0" stroke-width="1.25"/><path d="M8.500 10.500v4h3M11.500 11l2.500 2l-2.500 2z" fill="#a0a0a0" stroke="#a0a0a0" stroke-width="1.25"/></svg><svg style="left:556px;top:111px;overflow:visible" width="17" height="16" viewBox="0 0 17 17" preserveAspectRatio="none"><g transform="translate(1,1)"><path d="M4.500 9.500v-6q0-1 1-1t1 1v4v-5.500q0-1 1-1t1 1v5.500v-5q0-1 1-1t1 1v5v-3.500q0-1 1-1t1 1v7q0 4-3.500 5h-2.500q-2-1-4.500-6q-.5-1.500 .5-1.500t2 1.500z" fill="#fff" stroke="#ffffff" stroke-width="1.25"/><circle cx="8" cy="7" r="2.8" fill="#ffffff"/><path d="M4 3l8 8M12 3l-8 8" fill="none" stroke="#ffffff" stroke-width="1.62"/><path d="M8.500 10.500v4h3M11.500 11l2.500 2l-2.500 2z" fill="#ffffff" stroke="#ffffff" stroke-width="1.25"/></g><path d="M4.500 9.500v-6q0-1 1-1t1 1v4v-5.500q0-1 1-1t1 1v5.500v-5q0-1 1-1t1 1v5v-3.500q0-1 1-1t1 1v7q0 4-3.500 5h-2.500q-2-1-4.500-6q-.5-1.500 .5-1.500t2 1.500z" fill="#fff" stroke="#a0a0a0" stroke-width="1.25"/><circle cx="8" cy="7" r="2.8" fill="#a0a0a0"/><path d="M4 3l8 8M12 3l-8 8" fill="none" stroke="#a0a0a0" stroke-width="1.62"/><path d="M8.500 10.500v4h3M11.500 11l2.500 2l-2.500 2z" fill="#a0a0a0" stroke="#a0a0a0" stroke-width="1.25"/></svg><svg style="left:579px;top:111px;overflow:visible" width="17" height="16" viewBox="0 0 17 17" preserveAspectRatio="none"><g transform="translate(1,1)"><path d="M3 2l11 6l-11 6z" fill="#ffffff"/></g><path d="M3 2l11 6l-11 6z" fill="#a0a0a0"/></svg><svg style="left:602px;top:111px;overflow:visible" width="17" height="16" viewBox="0 0 17 17" preserveAspectRatio="none"><g transform="translate(1,1)"><rect x="3" y="2.5" width="11" height="11" fill="#ffffff"/></g><rect x="3" y="2.5" width="11" height="11" fill="#a0a0a0"/></svg><svg style="left:625px;top:111px;overflow:visible" width="17" height="16" viewBox="0 0 17 17" preserveAspectRatio="none"><g transform="translate(1,1)"><rect x="3.5" y="2" width="3.5" height="12" fill="#ffffff"/><rect x="9.5" y="2" width="3.5" height="12" fill="#ffffff"/></g><rect x="3.5" y="2" width="3.5" height="12" fill="#a0a0a0"/><rect x="9.5" y="2" width="3.5" height="12" fill="#a0a0a0"/></svg><svg style="left:648px;top:111px;overflow:visible" width="17" height="16" viewBox="0 0 17 17" preserveAspectRatio="none"><g transform="translate(1,1)"><path d="M2 2l10 6l-10 6z" fill="#ffffff"/><rect x="11.5" y="1.5" width="2.5" height="13" fill="#ffffff"/></g><path d="M2 2l10 6l-10 6z" fill="#a0a0a0"/><rect x="11.5" y="1.5" width="2.5" height="13" fill="#a0a0a0"/></svg><svg style="left:671px;top:111px;overflow:visible" width="17" height="16" viewBox="0 0 17 17" preserveAspectRatio="none"><g transform="translate(1,1)"><path d="M2 1l5 4v-2h2.500v9h-4.500v-5l-3 2z" fill="#ffffff"/><path d="M10.500 1.500v12M5 12.500h9M10.500 5.500h3.500M10.500 8.500h3.500" fill="none" stroke="#ffffff" stroke-width="2.00"/></g><path d="M2 1l5 4v-2h2.500v9h-4.500v-5l-3 2z" fill="#a0a0a0"/><path d="M10.500 1.500v12M5 12.500h9M10.500 5.500h3.500M10.500 8.500h3.500" fill="none" stroke="#a0a0a0" stroke-width="2.00"/></svg><svg style="left:694px;top:111px;overflow:visible" width="17" height="16" viewBox="0 0 17 17" preserveAspectRatio="none"><g transform="translate(1,1)"><path d="M1 6.500h4v-3h6.500v-2l3.500 3.500l-3.500 3v-2h-3v7h-7.500z" fill="#ffffff"/><path d="M10.500 8v5.500M3 13.500h11" fill="none" stroke="#ffffff" stroke-width="2.00"/><path d="M7 6l4-4" fill="none" stroke="#fff" stroke-width="1.50"/></g><path d="M1 6.500h4v-3h6.500v-2l3.500 3.500l-3.500 3v-2h-3v7h-7.500z" fill="#a0a0a0"/><path d="M10.500 8v5.500M3 13.500h11" fill="none" stroke="#a0a0a0" stroke-width="2.00"/><path d="M7 6l4-4" fill="none" stroke="#fff" stroke-width="1.50"/></svg><svg style="left:717px;top:111px;overflow:visible" width="17" height="16" viewBox="0 0 17 17" preserveAspectRatio="none"><g transform="translate(1,1)"><path d="M1.500 2l6.500 6l-6.500 6zM8 2l6.500 6l-6.500 6z" fill="#ffffff"/></g><path d="M1.500 2l6.500 6l-6.500 6zM8 2l6.500 6l-6.500 6z" fill="#a0a0a0"/></svg><svg style="left:740px;top:111px;overflow:visible" width="17" height="16" viewBox="0 0 17 17" preserveAspectRatio="none"><g transform="translate(1,1)"><path d="M1 2.500l10 4v-4.500h3v12h-3v-4.500l-10 4l0-2.500l6-3l-6-3z" fill="#ffffff"/></g><path d="M1 2.500l10 4v-4.500h3v12h-3v-4.500l-10 4l0-2.500l6-3l-6-3z" fill="#a0a0a0"/></svg><div class="" style="left:766px;top:105px;width:1px;height:28px;background:#a0a0a0;"></div><div class="" style="left:767px;top:105px;width:1px;height:28px;background:#fff;"></div><div class="grip" style="left:771px;top:106px;width:3px;height:26px;"></div><div class="grip" style="left:775px;top:106px;width:3px;height:26px;"></div><svg style="left:782px;top:111px;overflow:visible" width="17" height="16" viewBox="0 0 17 17" preserveAspectRatio="none"><g transform="translate(1,1)"><rect x="2" y="5" width="12" height="6" rx="1.500" fill="#ffffff"/><path d="M3 7h10M3 9h10" fill="none" stroke="#d8d8d8" stroke-width="0.88" stroke-dasharray="1 1"/><path d="M3 11v1.500" fill="none" stroke="#ffffff" stroke-width="1.25"/></g><rect x="2" y="5" width="12" height="6" rx="1.500" fill="#a0a0a0"/><path d="M3 7h10M3 9h10" fill="none" stroke="#d8d8d8" stroke-width="0.88" stroke-dasharray="1 1"/><path d="M3 11v1.500" fill="none" stroke="#a0a0a0" stroke-width="1.25"/></svg><svg style="left:805px;top:111px;overflow:visible" width="17" height="16" viewBox="0 0 17 17" preserveAspectRatio="none"><g transform="translate(1,1)"><rect x="1" y="4" width="14" height="7" rx="1.500" fill="#ffffff"/><path d="M2 6h12M2 9h12" fill="none" stroke="#d8d8d8" stroke-width="0.88" stroke-dasharray="1 1"/><path d="M3 11v1.500M13 11v1.500" fill="none" stroke="#ffffff" stroke-width="1.25"/></g><rect x="1" y="4" width="14" height="7" rx="1.500" fill="#a0a0a0"/><path d="M2 6h12M2 9h12" fill="none" stroke="#d8d8d8" stroke-width="0.88" stroke-dasharray="1 1"/><path d="M3 11v1.500M13 11v1.500" fill="none" stroke="#a0a0a0" stroke-width="1.25"/></svg><svg style="left:828px;top:111px;overflow:visible" width="17" height="16" viewBox="0 0 17 17" preserveAspectRatio="none"><g transform="translate(1,1)"><rect x="2" y="5" width="12" height="7" rx="1.500" fill="#ffffff"/><path d="M3 7h10M3 10h10" fill="none" stroke="#d8d8d8" stroke-width="0.88" stroke-dasharray="1 1"/><path d="M6 2h4l-2 3zM3 12.500h2" fill="#ffffff"/></g><rect x="2" y="5" width="12" height="7" rx="1.500" fill="#a0a0a0"/><path d="M3 7h10M3 10h10" fill="none" stroke="#d8d8d8" stroke-width="0.88" stroke-dasharray="1 1"/><path d="M6 2h4l-2 3zM3 12.500h2" fill="#a0a0a0"/></svg><svg style="left:851px;top:111px;overflow:visible" width="17" height="16" viewBox="0 0 17 17" preserveAspectRatio="none"><g transform="translate(1,1)"><rect x="2" y="4" width="12" height="7" rx="1.500" fill="#ffffff"/><path d="M3 6h10M3 9h10" fill="none" stroke="#d8d8d8" stroke-width="0.88" stroke-dasharray="1 1"/><path d="M8 11v2M5 14h6" fill="none" stroke="#ffffff" stroke-width="1.75"/></g><rect x="2" y="4" width="12" height="7" rx="1.500" fill="#a0a0a0"/><path d="M3 6h10M3 9h10" fill="none" stroke="#d8d8d8" stroke-width="0.88" stroke-dasharray="1 1"/><path d="M8 11v2M5 14h6" fill="none" stroke="#a0a0a0" stroke-width="1.75"/></svg><svg style="left:874px;top:111px;overflow:visible" width="17" height="16" viewBox="0 0 17 17" preserveAspectRatio="none"><g transform="translate(1,1)"><path d="M2 2h12" fill="none" stroke="#ffffff" stroke-width="2.50" stroke-dasharray="1 1"/><path d="M8 3v10M3 7.500h10" fill="none" stroke="#ffffff" stroke-width="1.62"/></g><path d="M2 2h12" fill="none" stroke="#a0a0a0" stroke-width="2.50" stroke-dasharray="1 1"/><path d="M8 3v10M3 7.500h10" fill="none" stroke="#a0a0a0" stroke-width="1.62"/></svg><svg style="left:897px;top:111px;overflow:visible" width="17" height="16" viewBox="0 0 17 17" preserveAspectRatio="none"><g transform="translate(1,1)"><path d="M3 2h10" fill="none" stroke="#ffffff" stroke-width="2.50" stroke-dasharray="1 1"/><path d="M8 3v4M1 7.500h14M4 7.500v6M12 7.500v6M2 11h4M10 11h4" fill="none" stroke="#ffffff" stroke-width="1.62"/></g><path d="M3 2h10" fill="none" stroke="#a0a0a0" stroke-width="2.50" stroke-dasharray="1 1"/><path d="M8 3v4M1 7.500h14M4 7.500v6M12 7.500v6M2 11h4M10 11h4" fill="none" stroke="#a0a0a0" stroke-width="1.62"/></svg><svg style="left:920px;top:111px;overflow:visible" width="17" height="16" viewBox="0 0 17 17" preserveAspectRatio="none"><g transform="translate(1,1)"><path d="M4 1v8M12 1v8M2 4h4M10 4h4M2 9h12M8 9v4" fill="none" stroke="#ffffff" stroke-width="1.62"/><path d="M3 14h10" fill="none" stroke="#ffffff" stroke-width="2.50" stroke-dasharray="1 1"/></g><path d="M4 1v8M12 1v8M2 4h4M10 4h4M2 9h12M8 9v4" fill="none" stroke="#a0a0a0" stroke-width="1.62"/><path d="M3 14h10" fill="none" stroke="#a0a0a0" stroke-width="2.50" stroke-dasharray="1 1"/></svg><svg style="left:943px;top:111px;overflow:visible" width="17" height="16" viewBox="0 0 17 17" preserveAspectRatio="none"><g transform="translate(1,1)"><path d="M8 1v6M5 4h6M2 7.500h12M4 7.500v5M12 7.500v5M8 7.500v5" fill="none" stroke="#ffffff" stroke-width="1.62"/><path d="M1 13.5h14" fill="none" stroke="#ffffff" stroke-width="2.50" stroke-dasharray="1 1"/></g><path d="M8 1v6M5 4h6M2 7.500h12M4 7.500v5M12 7.500v5M8 7.500v5" fill="none" stroke="#a0a0a0" stroke-width="1.62"/><path d="M1 13.5h14" fill="none" stroke="#a0a0a0" stroke-width="2.50" stroke-dasharray="1 1"/></svg><svg style="left:966px;top:111px;overflow:visible" width="17" height="16" viewBox="0 0 17 17" preserveAspectRatio="none"><g transform="translate(1,1)"><path d="M1 2h14" fill="none" stroke="#ffffff" stroke-width="2.50" stroke-dasharray="1 1"/><path d="M3 1l1.500 2M13 1l-1.500 2M8 1v2" fill="none" stroke="#ffffff" stroke-width="1.25"/><path d="M4 3v4M12 3v4M2 7.500h12M8 7.500v6M5 11h6" fill="none" stroke="#ffffff" stroke-width="1.62"/></g><path d="M1 2h14" fill="none" stroke="#a0a0a0" stroke-width="2.50" stroke-dasharray="1 1"/><path d="M3 1l1.500 2M13 1l-1.500 2M8 1v2" fill="none" stroke="#a0a0a0" stroke-width="1.25"/><path d="M4 3v4M12 3v4M2 7.500h12M8 7.500v6M5 11h6" fill="none" stroke="#a0a0a0" stroke-width="1.62"/></svg><div class="sep" style="left:990px;top:108px;width:2px;height:22px;"></div><svg style="left:997px;top:111px;overflow:visible" width="17" height="16" viewBox="0 0 17 17" preserveAspectRatio="none"><g transform="translate(1,1)"><path d="M3 4.500h6v6h5M14.500 10.500v3" fill="none" stroke="#ffffff" stroke-width="1.62"/></g><path d="M3 4.500h6v6h5M14.500 10.500v3" fill="none" stroke="#a0a0a0" stroke-width="1.62"/></svg><div class="" style="left:1023px;top:105px;width:1px;height:28px;background:#a0a0a0;"></div><div class="" style="left:1024px;top:105px;width:1px;height:28px;background:#fff;"></div><div class="" style="left:4px;top:139px;width:327px;height:3px;border-top:1px solid #fff;border-bottom:1px solid #a0a0a0;border-left:1px solid #fff;border-right:1px solid #a0a0a0;"></div><div class="" style="left:4px;top:143px;width:327px;height:3px;border-top:1px solid #fff;border-bottom:1px solid #a0a0a0;border-left:1px solid #fff;border-right:1px solid #a0a0a0;"></div><div class="" style="left:332px;top:136px;width:12px;height:12px;border:1px solid;border-color:#fff #696969 #696969 #fff;"></div><svg style="left:334px;top:139px" width="8" height="5"><path d="M0.5 0.5h7l-3.5 4z" fill="#a0a0a0"/></svg><div class="" style="left:346px;top:137px;width:11px;height:11px;border:1px solid;border-color:#fff #696969 #696969 #fff;"></div><svg style="left:348px;top:139px" width="7" height="7"><path d="M0.500 0.500l6 5.500M6.500 0.500l-6 5.500" stroke="#000" stroke-width="1.800"/></svg><div class="" style="left:3px;top:150px;width:355px;height:557px;background:#fff;border:1px solid;border-color:#a0a0a0 #fff #fff #a0a0a0;"></div><div class="" style="left:4px;top:151px;width:353px;height:556px;border:1px solid;border-color:#696969 #e3e3e3 #e3e3e3 #696969;border-bottom:none;"></div><div class="" style="left:5px;top:690px;width:352px;height:17px;background:#f0f0f0;"></div><div class="" style="left:48px;top:689px;width:309px;height:1px;background:#000;"></div><svg style="left:4px;top:689px" width="48" height="18"><path d="M1 0l6.5 16.5h31l6.5-16.5" fill="#f0f0f0" stroke="#000" stroke-width="1"/></svg><span class="t" style="left:14px;top:689.5px;">工程</span><div class="" style="left:0px;top:707px;width:369px;height:1px;background:#a0a0a0;"></div><div class="" style="left:364px;top:135px;width:4px;height:572px;background:#fafafa;"></div><svg style="left:0;top:150px" width="360" height="320" viewBox="0 150 360 320" shape-rendering="crispEdges"><path d="M32.5 170V177" stroke="#808080" stroke-dasharray="1 1" fill="none"/><path d="M51.5 190V357" stroke="#808080" stroke-dasharray="1 1" fill="none"/><path d="M70.5 270V277" stroke="#808080" stroke-dasharray="1 1" fill="none"/><path d="M89.5 290V342" stroke="#808080" stroke-dasharray="1 1" fill="none"/><path d="M70.5 370V442" stroke="#808080" stroke-dasharray="1 1" fill="none"/><path d="M18 162.5H24" stroke="#808080" stroke-dasharray="1 1" fill="none"/><path d="M37 182.5H43" stroke="#808080" stroke-dasharray="1 1" fill="none"/><path d="M52 202.5H62" stroke="#808080" stroke-dasharray="1 1" fill="none"/><path d="M52 222.5H62" stroke="#808080" stroke-dasharray="1 1" fill="none"/><path d="M52 242.5H62" stroke="#808080" stroke-dasharray="1 1" fill="none"/><path d="M56 262.5H62" stroke="#808080" stroke-dasharray="1 1" fill="none"/><path d="M75 282.5H81" stroke="#808080" stroke-dasharray="1 1" fill="none"/><path d="M90 302.5H100" stroke="#808080" stroke-dasharray="1 1" fill="none"/><path d="M90 322.5H100" stroke="#808080" stroke-dasharray="1 1" fill="none"/><path d="M90 342.5H100" stroke="#808080" stroke-dasharray="1 1" fill="none"/><path d="M56 362.5H62" stroke="#808080" stroke-dasharray="1 1" fill="none"/><path d="M71 382.5H81" stroke="#808080" stroke-dasharray="1 1" fill="none"/><path d="M71 402.5H81" stroke="#808080" stroke-dasharray="1 1" fill="none"/><path d="M71 422.5H81" stroke="#808080" stroke-dasharray="1 1" fill="none"/><path d="M71 442.5H81" stroke="#808080" stroke-dasharray="1 1" fill="none"/></svg><div style="left:9px;top:158px;width:9px;height:9px;border:1px solid #919191;background:#fff"></div><div style="left:11px;top:162px;width:5px;height:1px;background:#000"></div><svg style="left:24px;top:154px" width="17" height="17" viewBox="0 0 17 17"><path d="M6.500 1.500h3.500v2.500h-3.500zM2.500 6.500h3.500v2.500h-3.500zM9.500 6.500h3.500v2.500h-3.500zM4.500 11.500h3.500v2.500h-3.500zM11.500 11.500h3.500v2.500h-3.500z" fill="#fff" stroke="#000" stroke-width="1.1"/><path d="M8 4.500v2M4.500 6v-1h7v1M5.500 9.500v2M11.500 9.500v2M1 8h1.500M13.500 8h1.500" fill="none" stroke="#000" stroke-width="1"/></svg><span class="t" style="left:45px;top:154px;">新工程</span><div style="left:28px;top:178px;width:9px;height:9px;border:1px solid #919191;background:#fff"></div><div style="left:30px;top:182px;width:5px;height:1px;background:#000"></div><svg style="left:43px;top:174px" width="17" height="17" viewBox="0 0 17 17"><path d="M1 4l2-2.500h12.500v9l-2 2.500h-12.500z" fill="#000"/><path d="M2 4.500h11l2-2.500" fill="none" stroke="#a0a0a0" stroke-width="0.8"/><rect x="3.5" y="6.5" width="1.2" height="2" fill="#ff0000"/><rect x="5.5" y="6.5" width="1.2" height="2" fill="#ff0000"/><rect x="1.5" y="10.5" width="3" height="1.5" fill="#00c000"/><path d="M5 11.500h8" fill="none" stroke="#fff" stroke-width="0.8"/></svg><span class="t" style="left:64px;top:174px;">新<i style="letter-spacing:-0.079px">PLC1[CP1H-E] </i>离线</span><svg style="left:62px;top:194px" width="17" height="17" viewBox="0 0 17 17"><path d="M2.500 1.500h9l2.500 2.500l-2.500 2.500h-9z" fill="#ffff90" stroke="#a0a000" stroke-width="1"/><path d="M4 3.200h6M4 4.800h6" fill="none" stroke="#fff" stroke-width="0.8" stroke-dasharray="1 1"/><circle cx="11.8" cy="4" r="0.8" fill="#000"/><path d="M13.500 5q2 2.500-.5 5" fill="none" stroke="#000" stroke-width="1"/><path d="M2 13q-1-2 1-3.500M4 10q2-1 3 .5t-2 2M8 13q-1-2 1-3.500M10 10q2-1 3 .5t-2 2" fill="none" stroke="#000" stroke-width="1"/><path d="M2 15h1.500M5.500 15h1.500M8.500 15h1.500M12 15h1.500" fill="none" stroke="#000" stroke-width="1"/></svg><span class="t" style="left:83px;top:194px;">符号</span><svg style="left:62px;top:214px" width="17" height="17" viewBox="0 0 17 17"><rect x="2.5" y="1.5" width="11" height="13" fill="#fff" stroke="#000" stroke-width="1.3"/><path d="M3 1.500h10" fill="none" stroke="#000" stroke-width="1.5" stroke-dasharray="1 1"/><path d="M4.500 5.500h7M4.500 8h2" fill="none" stroke="#a0a0a0" stroke-width="1" stroke-dasharray="1 1"/><circle cx="9.5" cy="10.5" r="2.3" fill="#ffff00" stroke="#000" stroke-width="1.1"/><circle cx="9.5" cy="10.5" r="0.7" fill="#000"/></svg><span class="t" style="left:83px;top:214px;">设置</span><svg style="left:62px;top:234px" width="17" height="17" viewBox="0 0 17 17"><path d="M1 8.500l9-5l5 2l-9 5.500z" fill="#a0a0a0" stroke="#000" stroke-width="0.8"/><path d="M3 10v2.500M5 11v2.500M7 10.500v2.500M9 9.500v2.500M11 8v2.500M13 7v2.500" fill="none" stroke="#000" stroke-width="1"/></svg><span class="t" style="left:83px;top:234px;">内存</span><div style="left:47px;top:258px;width:9px;height:9px;border:1px solid #919191;background:#fff"></div><div style="left:49px;top:262px;width:5px;height:1px;background:#000"></div><svg style="left:62px;top:254px" width="17" height="17" viewBox="0 0 17 17"><path d="M1 1.500l6-1l8.500 11.500l-1 3.500l-6-.5z" fill="#ffff00" stroke="#000" stroke-width="1.2"/><path d="M2.500 2l10 12M5 1.500l9 11.500M7 2l-4 3M9 4.500l-5 4M11 7l-5 4.500M13 10l-5 4M14.500 13l-3 2" fill="none" stroke="#000" stroke-width="1.4" stroke-dasharray="1.500 1"/></svg><span class="t" style="left:83px;top:254px;">程序</span><div style="left:66px;top:278px;width:9px;height:9px;border:1px solid #919191;background:#fff"></div><div style="left:68px;top:282px;width:5px;height:1px;background:#000"></div><svg style="left:81px;top:274px" width="17" height="17" viewBox="0 0 17 17"><path d="M3 2q4-2 9 0q3 2 1 5q-1 2-4 2l-4-.5q-5-1-4-4q0-1.500 2-2.500z" fill="#fff" stroke="#000" stroke-width="1.3"/><path d="M6 8l2 1l2-1l2 2l-1.500 1.500l2 3l-2.500-1l-2 2l-1.500-2l-2.500 1l1.500-3l-1.500-2z" fill="#ffff00" stroke="#000" stroke-width="1"/><circle cx="8.5" cy="10" r="1" fill="#000"/><path d="M7 1.500v3" fill="none" stroke="#000" stroke-width="1"/></svg><span class="t" style="left:102px;top:274px;">新程序<i style="letter-spacing:0.240px">1 (00)</i></span><svg style="left:100px;top:294px" width="17" height="17" viewBox="0 0 17 17"><path d="M2.500 1.500h9l2.500 2.500l-2.500 2.500h-9z" fill="#ffff90" stroke="#a0a000" stroke-width="1"/><path d="M4 3.200h6M4 4.800h6" fill="none" stroke="#fff" stroke-width="0.8" stroke-dasharray="1 1"/><circle cx="11.8" cy="4" r="0.8" fill="#000"/><path d="M13.500 5q2 2.500-.5 5" fill="none" stroke="#000" stroke-width="1"/><path d="M2 13q-1-2 1-3.500M4 10q2-1 3 .5t-2 2M8 13q-1-2 1-3.500M10 10q2-1 3 .5t-2 2" fill="none" stroke="#000" stroke-width="1"/><path d="M2 15h1.500M5.500 15h1.500M8.500 15h1.500M12 15h1.500" fill="none" stroke="#000" stroke-width="1"/></svg><span class="t" style="left:121px;top:294px;">符号</span><svg style="left:100px;top:314px" width="17" height="17" viewBox="0 0 17 17"><path d="M2 3.500q0-2 6-2t6 2v3q0 2-3 2.500v3.500l-2 2h-2l-2-2v-3.500q-3-.5-3-2.500z" fill="#ffff00" stroke="#000" stroke-width="1.2"/><path d="M2.500 4q5 2.500 11 0" fill="none" stroke="#000" stroke-width="1.2"/><path d="M6.500 7.500v4.500M9.500 7.500v4.500M6.500 9.500h3" fill="none" stroke="#000" stroke-width="1"/></svg><div style="left:119px;top:312px;width:23px;height:20px;background:#f0f0f0"></div><span class="t" style="left:121px;top:314px;">段<i style="letter-spacing:-1.788px">1</i></span><svg style="left:100px;top:334px" width="17" height="17" viewBox="0 0 17 17"><path d="M2 3.500q0-2 6-2t6 2v3q0 2-3 2.500v3.500l-2 2h-2l-2-2v-3.500q-3-.5-3-2.500z" fill="#ffff00" stroke="#000" stroke-width="1.2"/><path d="M2.500 4q5 2.500 11 0" fill="none" stroke="#000" stroke-width="1.2"/><path d="M6.500 7.500v4.500M9.500 7.500v4.500M6.500 9.500h3" fill="none" stroke="#000" stroke-width="1"/></svg><span class="t" style="left:121px;top:334px;"><i style="letter-spacing:-0.081px">END</i></span><div style="left:47px;top:358px;width:9px;height:9px;border:1px solid #919191;background:#fff"></div><div style="left:49px;top:362px;width:5px;height:1px;background:#000"></div><svg style="left:62px;top:354px" width="17" height="17" viewBox="0 0 17 17"><rect x="5.5" y="1.5" width="6" height="13" fill="#c0c0c0" stroke="#000" stroke-width="1.3"/><path d="M2 4h3.500M2 7h3.500M2 10h3.500M2 13h3.500M11.500 4h3.500M11.500 7h3.500M11.500 10h3.500M11.500 13h3.500" fill="none" stroke="#000" stroke-width="1.2"/></svg><span class="t" style="left:83px;top:354px;">功能块</span><svg style="left:81px;top:374px" width="17" height="17" viewBox="0 0 17 17"><rect x="5" y="5" width="8" height="10" fill="#000"/><path d="M13 7h3M13 10h3M13 13h3" fill="none" stroke="#000" stroke-width="1.2"/><path d="M2.500 4.500v-1.500q0-2 2-2t2 2v1.500" fill="none" stroke="#000" stroke-width="1.2"/><rect x="1" y="4.5" width="7" height="5.5" fill="#ffff00" stroke="#000" stroke-width="1.1"/><rect x="3.8" y="6.5" width="1.5" height="2" fill="#000"/></svg><span class="t" style="left:102px;top:374px;"><i style="letter-spacing:-0.566px">CP_ST_CLink</i></span><svg style="left:81px;top:394px" width="17" height="17" viewBox="0 0 17 17"><rect x="5" y="5" width="8" height="10" fill="#000"/><path d="M13 7h3M13 10h3M13 13h3" fill="none" stroke="#000" stroke-width="1.2"/><path d="M2.500 4.500v-1.500q0-2 2-2t2 2v1.500" fill="none" stroke="#000" stroke-width="1.2"/><rect x="1" y="4.5" width="7" height="5.5" fill="#ffff00" stroke="#000" stroke-width="1.1"/><rect x="3.8" y="6.5" width="1.5" height="2" fill="#000"/></svg><span class="t" style="left:102px;top:394px;"><i style="letter-spacing:-0.740px">CP_ST_Recv</i></span><svg style="left:81px;top:414px" width="17" height="17" viewBox="0 0 17 17"><rect x="5" y="5" width="8" height="10" fill="#000"/><path d="M13 7h3M13 10h3M13 13h3" fill="none" stroke="#000" stroke-width="1.2"/><path d="M2.500 4.500v-1.500q0-2 2-2t2 2v1.500" fill="none" stroke="#000" stroke-width="1.2"/><rect x="1" y="4.5" width="7" height="5.5" fill="#ffff00" stroke="#000" stroke-width="1.1"/><rect x="3.8" y="6.5" width="1.5" height="2" fill="#000"/></svg><span class="t" style="left:102px;top:414px;"><i style="letter-spacing:-0.659px">CP_ST_Send</i></span><svg style="left:81px;top:434px" width="17" height="17" viewBox="0 0 17 17"><rect x="5" y="5" width="8" height="10" fill="#000"/><path d="M13 7h3M13 10h3M13 13h3" fill="none" stroke="#000" stroke-width="1.2"/><path d="M2.500 4.500v-1.500q0-2 2-2t2 2v1.500" fill="none" stroke="#000" stroke-width="1.2"/><rect x="1" y="4.5" width="7" height="5.5" fill="#ffff00" stroke="#000" stroke-width="1.1"/><rect x="3.8" y="6.5" width="1.5" height="2" fill="#000"/></svg><span class="t" style="left:102px;top:434px;"><i style="letter-spacing:-0.625px">CP_ST_SLink</i></span><div class="" style="left:368px;top:133px;width:998px;height:555px;border:1px solid;border-color:#a0a0a0 #fff #fff #a0a0a0;"></div><div class="" style="left:369px;top:134px;width:996px;height:553px;border:1px solid;border-color:#696969 #e3e3e3 #696969 #696969;background:#fff;"></div><svg style="left:370px;top:135px" width="977" height="536" viewBox="370 135 977 536"><rect x="370" y="135" width="977" height="536" fill="#fff"/><rect x="370" y="135" width="54" height="536" fill="#f0f0f0"/><g shape-rendering="crispEdges"><path d="M418.5 135V671" stroke="#a0a0a0"/><path d="M370 175.5H419" stroke="#a0a0a0"/><path d="M370 176.5H418" stroke="#fff"/><rect x="418" y="176" width="1" height="2" fill="#f0f0f0"/><path d="M370 648.5H419" stroke="#a0a0a0"/><path d="M370 649.5H418" stroke="#fff"/><rect x="418" y="649" width="1" height="2" fill="#f0f0f0"/><path d="M424 177.5H1347" stroke="#e4e4e4"/><path d="M424 650.5H1347" stroke="#e4e4e4"/><path d="M424 135.5h2M525 135.5h3M526.5 134v3M627 135.5h3M628.5 134v3M729 135.5h3M730.5 134v3M831 135.5h3M832.5 134v3M933 135.5h3M934.5 134v3M1035 135.5h3M1036.5 134v3M1137 135.5h3M1138.5 134v3M1239 135.5h3M1240.5 134v3M1341 135.5h3M1342.5 134v3M424 178.5h2M525 178.5h3M526.5 177v3M627 178.5h3M628.5 177v3M729 178.5h3M730.5 177v3M831 178.5h3M832.5 177v3M933 178.5h3M934.5 177v3M1035 178.5h3M1036.5 177v3M1137 178.5h3M1138.5 177v3M1239 178.5h3M1240.5 177v3M1341 178.5h3M1342.5 177v3M424 221.5h2M525 221.5h3M526.5 220v3M627 221.5h3M628.5 220v3M729 221.5h3M730.5 220v3M831 221.5h3M832.5 220v3M933 221.5h3M934.5 220v3M1035 221.5h3M1036.5 220v3M1137 221.5h3M1138.5 220v3M1239 221.5h3M1240.5 220v3M1341 221.5h3M1342.5 220v3M424 264.5h2M525 264.5h3M526.5 263v3M627 264.5h3M628.5 263v3M729 264.5h3M730.5 263v3M831 264.5h3M832.5 263v3M933 264.5h3M934.5 263v3M1035 264.5h3M1036.5 263v3M1137 264.5h3M1138.5 263v3M1239 264.5h3M1240.5 263v3M1341 264.5h3M1342.5 263v3M424 307.5h2M525 307.5h3M526.5 306v3M627 307.5h3M628.5 306v3M729 307.5h3M730.5 306v3M831 307.5h3M832.5 306v3M933 307.5h3M934.5 306v3M1035 307.5h3M1036.5 306v3M1137 307.5h3M1138.5 306v3M1239 307.5h3M1240.5 306v3M1341 307.5h3M1342.5 306v3M424 350.5h2M525 350.5h3M526.5 349v3M627 350.5h3M628.5 349v3M729 350.5h3M730.5 349v3M831 350.5h3M832.5 349v3M933 350.5h3M934.5 349v3M1035 350.5h3M1036.5 349v3M1137 350.5h3M1138.5 349v3M1239 350.5h3M1240.5 349v3M1341 350.5h3M1342.5 349v3M424 393.5h2M525 393.5h3M526.5 392v3M627 393.5h3M628.5 392v3M729 393.5h3M730.5 392v3M831 393.5h3M832.5 392v3M933 393.5h3M934.5 392v3M1035 393.5h3M1036.5 392v3M1137 393.5h3M1138.5 392v3M1239 393.5h3M1240.5 392v3M1341 393.5h3M1342.5 392v3M424 436.5h2M525 436.5h3M526.5 435v3M627 436.5h3M628.5 435v3M729 436.5h3M730.5 435v3M831 436.5h3M832.5 435v3M933 436.5h3M934.5 435v3M1035 436.5h3M1036.5 435v3M1137 436.5h3M1138.5 435v3M1239 436.5h3M1240.5 435v3M1341 436.5h3M1342.5 435v3M424 479.5h2M525 479.5h3M526.5 478v3M627 479.5h3M628.5 478v3M729 479.5h3M730.5 478v3M831 479.5h3M832.5 478v3M933 479.5h3M934.5 478v3M1035 479.5h3M1036.5 478v3M1137 479.5h3M1138.5 478v3M1239 479.5h3M1240.5 478v3M1341 479.5h3M1342.5 478v3M424 522.5h2M525 522.5h3M526.5 521v3M627 522.5h3M628.5 521v3M729 522.5h3M730.5 521v3M831 522.5h3M832.5 521v3M933 522.5h3M934.5 521v3M1035 522.5h3M1036.5 521v3M1137 522.5h3M1138.5 521v3M1239 522.5h3M1240.5 521v3M1341 522.5h3M1342.5 521v3M424 565.5h2M525 565.5h3M526.5 564v3M627 565.5h3M628.5 564v3M729 565.5h3M730.5 564v3M831 565.5h3M832.5 564v3M933 565.5h3M934.5 564v3M1035 565.5h3M1036.5 564v3M1137 565.5h3M1138.5 564v3M1239 565.5h3M1240.5 564v3M1341 565.5h3M1342.5 564v3M424 608.5h2M525 608.5h3M526.5 607v3M627 608.5h3M628.5 607v3M729 608.5h3M730.5 607v3M831 608.5h3M832.5 607v3M933 608.5h3M934.5 607v3M1035 608.5h3M1036.5 607v3M1137 608.5h3M1138.5 607v3M1239 608.5h3M1240.5 607v3M1341 608.5h3M1342.5 607v3M424 651.5h2M525 651.5h3M526.5 650v3M627 651.5h3M628.5 650v3M729 651.5h3M730.5 650v3M831 651.5h3M832.5 650v3M933 651.5h3M934.5 650v3M1035 651.5h3M1036.5 650v3M1137 651.5h3M1138.5 650v3M1239 651.5h3M1240.5 650v3M1341 651.5h3M1342.5 650v3" stroke="#d2d2d2" fill="none"/><path d="M423.5 135V671" stroke="#008000"/><path d="M1137.5 135V671" stroke="#008000"/><path d="M1040.5 135V172.5H1133.5V135" stroke="#000" fill="none"/><path d="M1072 135.5H1102" stroke="#000"/><path d="M424 240.5H469M482 240.5H632M469.5 234V247M481.500 234V247" stroke="#000" fill="none"/><rect x="632.5" y="190.5" width="195" height="460" stroke="#000" fill="none"/><path d="M628 283.5h4M628 326.5h4M628 369.5h4M628 412.5h4M628 455.5h4M628 498.5h4M628 541.5h4M628 584.5h4M628 627.5h4M828 283.5h4M828 326.5h4M828 369.5h4M828 412.5h4M828 455.5h4M828 498.5h4" stroke="#000" fill="none"/><path d="M828 240.5H1081M1094 240.5H1137M1137.500 236V246" stroke="#000" fill="none"/><path d="M424 670.5H469M482 670.5H571M584 670.5H1040M469.5 664V671M481.500 664V671M571.500 664V671M583.500 664V671M1040.500 671V664.500H1133.500V671M1133 670.5H1137" stroke="#000" fill="none"/><path d="M577.500 664V671M575 667.500l2.500-3l2.500 3" stroke="#000" fill="none" shape-rendering="auto"/></g><circle cx="1087.5" cy="240.5" r="6" fill="#fff" stroke="#000"/><g font-family="'Liberation Mono',monospace" font-size="12.5" fill="#000"><text x="1075" y="146.5" textLength="24" lengthAdjust="spacingAndGlyphs">&amp;640</text><text x="463" y="232" textLength="24" lengthAdjust="spacingAndGlyphs">P<tspan dy="-1.500">_</tspan><tspan dy="1.500">On</tspan></text><text x="699.5" y="189" textLength="60" lengthAdjust="spacingAndGlyphs">SlientLink</text><text x="696.5" y="209.5" textLength="66" lengthAdjust="spacingAndGlyphs">CP<tspan dy="-1.500">_</tspan><tspan dy="1.500">ST</tspan><tspan dy="-1.500">_</tspan><tspan dy="1.500">SLink</tspan></text><text x="703.5" y="239.5" textLength="54" lengthAdjust="spacingAndGlyphs">guanyumou</text><text x="636" y="232" textLength="36" lengthAdjust="spacingAndGlyphs">(BOOL)</text><text x="635" y="241" textLength="12" lengthAdjust="spacingAndGlyphs">EN</text><text x="636" y="275" textLength="36" lengthAdjust="spacingAndGlyphs">(BOOL)</text><text x="635" y="284" textLength="42" lengthAdjust="spacingAndGlyphs">Execute</text><text x="561.5" y="275" textLength="30" lengthAdjust="spacingAndGlyphs">W0.00</text><text x="636" y="318" textLength="36" lengthAdjust="spacingAndGlyphs">(UINT)</text><text x="635" y="327" textLength="36" lengthAdjust="spacingAndGlyphs">UnitNo</text><text x="561.5" y="318" textLength="30" lengthAdjust="spacingAndGlyphs">#FFF0</text><text x="636" y="361" textLength="36" lengthAdjust="spacingAndGlyphs">(UINT)</text><text x="635" y="370" textLength="48" lengthAdjust="spacingAndGlyphs">SocketNo</text><text x="570.5" y="361" textLength="12" lengthAdjust="spacingAndGlyphs">&amp;1</text><text x="636" y="404" textLength="36" lengthAdjust="spacingAndGlyphs">(UINT)</text><text x="635" y="413" textLength="42" lengthAdjust="spacingAndGlyphs">IPaddr1</text><text x="570.5" y="404" textLength="12" lengthAdjust="spacingAndGlyphs">&amp;0</text><text x="636" y="447" textLength="36" lengthAdjust="spacingAndGlyphs">(UINT)</text><text x="635" y="456" textLength="42" lengthAdjust="spacingAndGlyphs">IPaddr2</text><text x="570.5" y="447" textLength="12" lengthAdjust="spacingAndGlyphs">&amp;0</text><text x="636" y="490" textLength="36" lengthAdjust="spacingAndGlyphs">(UINT)</text><text x="635" y="499" textLength="42" lengthAdjust="spacingAndGlyphs">IPaddr3</text><text x="570.5" y="490" textLength="12" lengthAdjust="spacingAndGlyphs">&amp;0</text><text x="636" y="533" textLength="36" lengthAdjust="spacingAndGlyphs">(UINT)</text><text x="635" y="542" textLength="42" lengthAdjust="spacingAndGlyphs">IPaddr4</text><text x="570.5" y="533" textLength="12" lengthAdjust="spacingAndGlyphs">&amp;0</text><text x="636" y="576" textLength="36" lengthAdjust="spacingAndGlyphs">(UINT)</text><text x="635" y="585" textLength="42" lengthAdjust="spacingAndGlyphs">RemPort</text><text x="570.5" y="576" textLength="12" lengthAdjust="spacingAndGlyphs">&amp;0</text><text x="636" y="619" textLength="36" lengthAdjust="spacingAndGlyphs">(UINT)</text><text x="635" y="628" textLength="42" lengthAdjust="spacingAndGlyphs">LocPort</text><text x="561.5" y="619" textLength="30" lengthAdjust="spacingAndGlyphs">&amp;4096</text><text x="790" y="232" textLength="36" lengthAdjust="spacingAndGlyphs">(BOOL)</text><text x="807" y="241" textLength="18" lengthAdjust="spacingAndGlyphs">ENO</text><text x="790" y="275" textLength="36" lengthAdjust="spacingAndGlyphs">(BOOL)</text><text x="801" y="284" textLength="24" lengthAdjust="spacingAndGlyphs">Done</text><text x="867.5" y="275" textLength="30" lengthAdjust="spacingAndGlyphs">W0.02</text><text x="790" y="318" textLength="36" lengthAdjust="spacingAndGlyphs">(BOOL)</text><text x="801" y="327" textLength="24" lengthAdjust="spacingAndGlyphs">Wait</text><text x="867.5" y="318" textLength="30" lengthAdjust="spacingAndGlyphs">W0.03</text><text x="790" y="361" textLength="36" lengthAdjust="spacingAndGlyphs">(BOOL)</text><text x="801" y="370" textLength="24" lengthAdjust="spacingAndGlyphs">Link</text><text x="867.5" y="361" textLength="30" lengthAdjust="spacingAndGlyphs">W0.04</text><text x="790" y="404" textLength="36" lengthAdjust="spacingAndGlyphs">(BOOL)</text><text x="795" y="413" textLength="30" lengthAdjust="spacingAndGlyphs">Error</text><text x="867.5" y="404" textLength="30" lengthAdjust="spacingAndGlyphs">W0.05</text><text x="790" y="447" textLength="36" lengthAdjust="spacingAndGlyphs">(UINT)</text><text x="789" y="456" textLength="36" lengthAdjust="spacingAndGlyphs">Status</text><text x="876.5" y="447" textLength="12" lengthAdjust="spacingAndGlyphs">D0</text><text x="790" y="490" textLength="36" lengthAdjust="spacingAndGlyphs">(UINT)</text><text x="777" y="499" textLength="48" lengthAdjust="spacingAndGlyphs">Instance</text><text x="876.5" y="490" textLength="12" lengthAdjust="spacingAndGlyphs">D1</text><text x="1071" y="232" textLength="30" lengthAdjust="spacingAndGlyphs">W0.01</text><text x="463" y="662" textLength="24" lengthAdjust="spacingAndGlyphs">P<tspan dy="-1.500">_</tspan><tspan dy="1.500">On</tspan></text><text x="561.5" y="662" textLength="30" lengthAdjust="spacingAndGlyphs">W0.02</text></g><g font-family="'Liberation Sans','Noto Sans CJK SC',sans-serif" font-size="12"><text x="451" y="257.500" fill="#0078d7">常通标志</text><text x="1148" y="147" fill="#000">位数</text></g><g font-family="'Liberation Sans',sans-serif" font-size="11" fill="#000"><text x="372.5" y="188">1</text><text x="404.500" y="200">3</text><text x="372.500" y="661">2</text><text x="404.500" y="673">6</text></g></svg><div class="hatch" style="left:1347px;top:135px;width:17px;height:536px;"></div><div class="btn3d" style="left:1347px;top:135px;width:17px;height:6px;"></div><div class="btn3d" style="left:1347px;top:141px;width:17px;height:17px;"></div><svg style="left:1352px;top:147px" width="7" height="4"><path d="M0 4h7l-3.5-4z" fill="#000"/></svg><div class="btn3d" style="left:1347px;top:190px;width:17px;height:31px;"></div><div class="btn3d" style="left:1347px;top:654px;width:17px;height:17px;"></div><svg style="left:1352px;top:661px" width="7" height="4"><path d="M0 0h7l-3.5 4z" fill="#000"/></svg><div class="hatch" style="left:370px;top:671px;width:977px;height:16px;"></div><div class="btn3d" style="left:370px;top:671px;width:6px;height:16px;"></div><div class="btn3d" style="left:376px;top:671px;width:17px;height:16px;"></div><svg style="left:382px;top:675px" width="4" height="7"><path d="M4 0v7l-4-3.5z" fill="#000"/></svg><div class="btn3d" style="left:393px;top:671px;width:468px;height:16px;"></div><div class="btn3d" style="left:1330px;top:671px;width:17px;height:16px;"></div><svg style="left:1337px;top:675px" width="4" height="7"><path d="M0 0v7l4-3.5z" fill="#000"/></svg><div class="" style="left:1347px;top:671px;width:17px;height:16px;background:#f0f0f0;"></div><div class="btn3d" style="left:369px;top:693px;width:11px;height:11px;"></div><svg style="left:371px;top:695px" width="7" height="7"><path d="M0.5 0.5l6 6M6.5 0.5l-6 6" stroke="#000" stroke-width="1.6"/></svg><div class="btn3d" style="left:382px;top:693px;width:11px;height:11px;background:#c0c0c0;"></div><svg style="left:385px;top:695px" width="4" height="7"><path d="M4 0v7l-4-3.5z" fill="#000"/></svg><div class="" style="left:396px;top:692px;width:50px;height:17px;background:#f8f8f8;border-left:1px solid #fff;border-top:1px solid #fff;"></div><span class="t" style="left:403.5px;top:694.5px;">全局的</span><span class="t" style="left:452.4px;top:693px;">名称<i style="letter-spacing:-0.944px">:</i></span><div class="yel" style="left:483px;top:693px;width:262px;height:15px;overflow:hidden;"></div><span class="t" style="left:485.4px;top:693.5px;clip-path:inset(0 0 2.5px 0);"><i style="letter-spacing:-0.338px">P_First_Cycle</i></span><span class="t" style="left:752px;top:693px;">地址值<i style="letter-spacing:-0.344px">:</i></span><div class="yel" style="left:795px;top:693px;width:70px;height:15px;"></div><span class="t" style="left:797.6px;top:693.5px;"><i style="letter-spacing:0.139px">A200.11</i></span><span class="t" style="left:871.7px;top:693px;">注释<i style="letter-spacing:-0.344px">:</i></span><div class="yel" style="left:903px;top:693px;width:463px;height:15px;"></div><span class="t" style="left:904.6px;top:693.5px;">第一次循环标志</span><div class="" style="left:0px;top:708px;width:1366px;height:1px;background:#f0f0f0;"></div><span class="t" style="left:2px;top:712.5px;">需要帮助，请按<i style="letter-spacing:-1.508px">F1</i></span><div class="pane" style="left:530px;top:710px;width:20px;height:18px;"></div><div class="pane" style="left:551px;top:710px;width:67px;height:18px;"></div><div class="pane" style="left:620px;top:710px;width:255px;height:18px;"></div><div class="pane" style="left:878px;top:710px;width:55px;height:18px;"></div><div class="pane" style="left:936px;top:710px;width:55px;height:18px;"></div><div class="pane" style="left:993px;top:710px;width:131px;height:18px;"></div><div class="pane" style="left:1127px;top:710px;width:239px;height:18px;"></div><span class="t" style="left:622px;top:712.5px;">新<i style="letter-spacing:-0.002px">PLC1(</i>网络<i style="letter-spacing:-0.002px">:0,</i>节点<i style="letter-spacing:-0.002px">:0) - </i>离线</span><span class="t" style="left:997px;top:712.5px;">条<i style="letter-spacing:0.517px"> 0 (0, 0)  - 100%</i></span><div class="" style="left:1173px;top:700px;width:192px;height:28px;background:#fff;border:1px solid #2f8cf0;border-radius:14px;"></div><svg style="left:1168px;top:694px" width="36" height="36" viewBox="0 0 36 36"><circle cx="18" cy="18" r="17" fill="#2f86f6"/><ellipse cx="18" cy="16.500" rx="8.300" ry="8.800" fill="none" stroke="#fff" stroke-width="3.400"/><path d="M21 23q3 2.500 6 1.500" stroke="#fff" stroke-width="3" fill="none"/><circle cx="27" cy="25.500" r="2.500" fill="#8fe04a"/></svg><span class="t" style="left:1209px;top:705.5px;color:#2f86f6;font-weight:bold;font-size:13px;">中</span><svg style="left:1232px;top:704px" width="130" height="20" viewBox="0 0 130 20" fill="#2f86f6"><path d="M7.440 4.190A6 6 0 1 1 0.960 12.640A7 7 0 0 0 7.440 4.190z"/><circle cx="24.800" cy="10.700" r="1.700" fill="none" stroke="#2f86f6" stroke-width="1.400"/><path d="M29.500 9h3.500q.5 3-2.500 5l-.5-.8q1.500-1 1.500-2h-2z"/><path d="M44 16l6-6a4 4 0 0 1 5-5l-2.5 2.5l2 2l2.5-2.5a4 4 0 0 1-5 5l-6 6z"/><circle cx="72" cy="10" r="7" fill="none" stroke="#2f86f6" stroke-width="1.8"/><circle cx="69.5" cy="8" r="1.2"/><circle cx="74.500" cy="8" r="1.2"/><path d="M68 11.500q4 4 8 0" fill="none" stroke="#2f86f6" stroke-width="1.5"/><path d="M90 3l-4 3l2 3l1.500-1v8h9v-8l1.500 1l2-3l-4-3q-4 2-8 0z"/><rect x="110" y="3" width="6" height="6"/><rect x="118" y="3" width="6" height="6"/><rect x="110" y="11" width="6" height="6"/><rect x="118" y="11" width="6" height="6"/></svg><div class="" style="left:0px;top:728px;width:1366px;height:8px;background:linear-gradient(90deg,#2a3b42 0%,#2a3a42 55%,#1f2b3a 85%,#1e2939 100%);"></div><div class="" style="left:611px;top:728px;width:92px;height:8px;background:#4e5e65;"></div><div class="" style="left:1360px;top:728px;width:1px;height:8px;background:#5a6470;"></div><span class="t" style="left:1261px;top:731px;color:#fff;font-size:12px;">14:28</span></body></html>
